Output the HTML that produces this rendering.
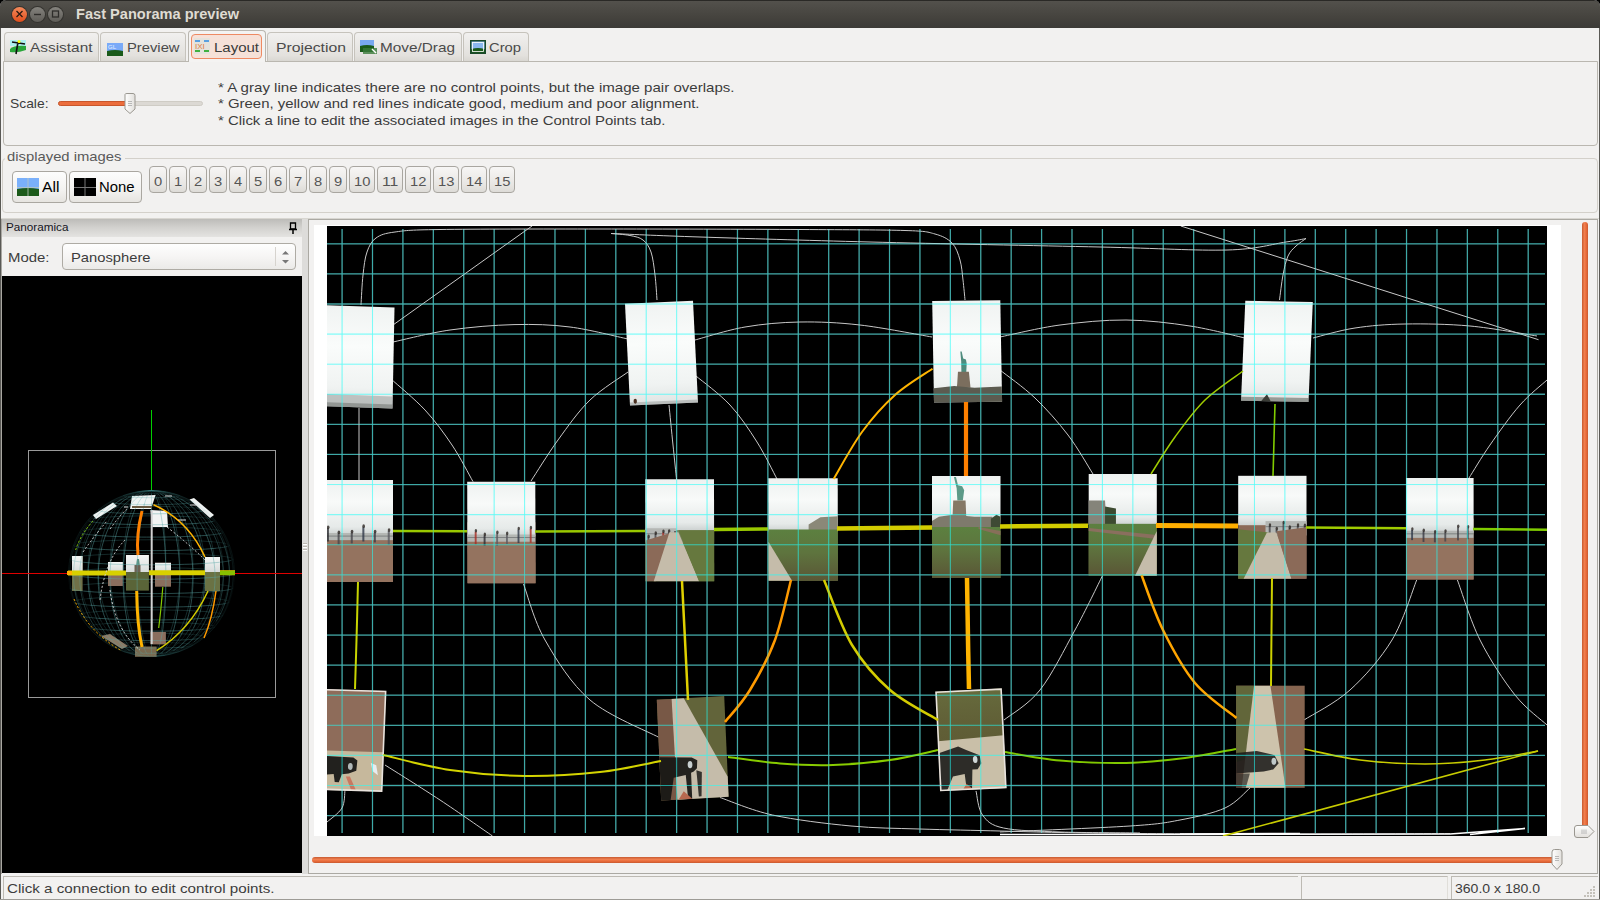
<!DOCTYPE html><html><head><meta charset="utf-8"><style>
*{box-sizing:border-box;margin:0;padding:0}
html,body{width:1600px;height:900px;overflow:hidden;background:#000}
body{position:relative;font-family:"Liberation Sans", sans-serif;color:#3c3c3c;font-size:13px}
.a{position:absolute}
.t{position:absolute;white-space:nowrap;line-height:1}
</style></head><body>
<div class="a" style="left:0;top:0;width:1600px;height:900px;background:#f2f1f0;border-radius:6px 6px 0 0;"></div>
<div class="a" style="left:0;top:0;width:1600px;height:28px;border-radius:6px 6px 0 0;background:linear-gradient(#53514c,#45433e 60%,#3c3b37);border-top:1px solid #2a2926"></div>
<div class="a" style="left:0;top:28px;width:1px;height:872px;background:#5a5955"></div>
<div class="a" style="left:1599px;top:28px;width:1px;height:872px;background:#5a5955"></div>
<div class="a" style="left:11.0px;top:5.5px;width:17.0px;height:17.0px;border-radius:50%;background:#34332f"></div><div class="a" style="left:12.0px;top:6.5px;width:15.0px;height:15.0px;border-radius:50%;background:linear-gradient(#f38a5c,#e04e1c)"></div>
<div class="a" style="left:29.0px;top:5.5px;width:17.0px;height:17.0px;border-radius:50%;background:#34332f"></div><div class="a" style="left:30.0px;top:6.5px;width:15.0px;height:15.0px;border-radius:50%;background:linear-gradient(#84827d,#5f5d58)"></div>
<div class="a" style="left:47.0px;top:5.5px;width:17.0px;height:17.0px;border-radius:50%;background:#34332f"></div><div class="a" style="left:48.0px;top:6.5px;width:15.0px;height:15.0px;border-radius:50%;background:linear-gradient(#84827d,#5f5d58)"></div>
<svg class="a" style="left:0;top:0" width="70" height="28"><path d="M16.5 11 L22.5 17 M22.5 11 L16.5 17" stroke="#2b1a12" stroke-width="1.3"/><path d="M34 14.5 H41" stroke="#2e2d2a" stroke-width="1.4"/><rect x="52.5" y="11" width="6" height="6" fill="none" stroke="#2e2d2a" stroke-width="1.3"/></svg>
<div class="t " id="t0" style="left:76px;top:6.90px;font-size:14px;color:#dfdbd2;font-weight:bold;transform:scaleX(1.0422);transform-origin:0 0;">Fast Panorama preview</div>
<div class="a" style="left:3px;top:61px;width:1595px;height:85px;border:1px solid #bab7b0;border-radius:0 0 4px 4px;background:#f2f1f0"></div>
<div class="a" style="left:4px;top:32px;width:95px;height:29px;border:1px solid #c6c3bc;border-bottom:none;border-radius:4px 4px 0 0;background:linear-gradient(#f1f0ef,#e3e1dd 80%,#d9d7d2)"></div>
<div class="a" style="left:100px;top:32px;width:86px;height:29px;border:1px solid #c6c3bc;border-bottom:none;border-radius:4px 4px 0 0;background:linear-gradient(#f1f0ef,#e3e1dd 80%,#d9d7d2)"></div>
<div class="a" style="left:188px;top:30px;width:78px;height:32px;border:1px solid #b9b6af;border-bottom:none;border-radius:4px 4px 0 0;background:#f4f3f2"></div>
<div class="a" style="left:191px;top:34px;width:71px;height:25px;border:1px solid #ee8a63;border-radius:4px;background:#f6e1d8"></div>
<div class="a" style="left:267px;top:32px;width:86px;height:29px;border:1px solid #c6c3bc;border-bottom:none;border-radius:4px 4px 0 0;background:linear-gradient(#f1f0ef,#e3e1dd 80%,#d9d7d2)"></div>
<div class="a" style="left:354px;top:32px;width:108px;height:29px;border:1px solid #c6c3bc;border-bottom:none;border-radius:4px 4px 0 0;background:linear-gradient(#f1f0ef,#e3e1dd 80%,#d9d7d2)"></div>
<div class="a" style="left:463px;top:32px;width:66px;height:29px;border:1px solid #c6c3bc;border-bottom:none;border-radius:4px 4px 0 0;background:linear-gradient(#f1f0ef,#e3e1dd 80%,#d9d7d2)"></div>
<svg class="a" style="left:0;top:28px" width="540" height="34">
<g transform="translate(10,12)">
 <rect x="0" y="0" width="16" height="6" fill="#aef0f0"/>
 <path d="M0 9 Q4 5 16 6 L16 10 Q8 13 0 12 Z" fill="#2aa63a"/>
 <path d="M6 14 L8 2 M2 2 L15 4" stroke="#111" stroke-width="1.6"/>
 <circle cx="9" cy="1.5" r="1.5" fill="#ff0"/>
</g>
<g transform="translate(107,15)">
 <rect x="0" y="0" width="16" height="13" fill="#7aaaf8"/>
 <path d="M0 8 Q8 6 16 8 L16 13 L0 13Z" fill="#1a5a1a"/>
 <text x="1" y="6" font-size="6" fill="#e8f0ff" font-family="Liberation Sans">GL</text>
</g>
<g transform="translate(194,10)">
 <rect x="0" y="0" width="16" height="16" fill="#e4e2dc"/>
 <rect x="1" y="2" width="5" height="2" fill="#5aa0e0"/><rect x="10" y="2" width="5" height="2" fill="#5aa0e0"/>
 <rect x="1" y="12" width="5" height="2" fill="#40b040"/><rect x="10" y="12" width="5" height="2" fill="#40b040"/>
 <text x="1" y="11" font-size="8" fill="#e08040" font-family="Liberation Sans">IXI</text>
</g>
<g transform="translate(360,12)">
 <rect x="0" y="0" width="14" height="12" fill="#78a8f0"/>
 <path d="M0 6 Q7 4 14 6 L14 12 L0 12Z" fill="#1a5a1a"/>
 <rect x="3" y="8" width="14" height="6" fill="#3a7a3a" opacity="0.8"/>
 <path d="M12 9 L16 13" stroke="#fff" stroke-width="1.5"/>
</g>
<g transform="translate(470,12)">
 <rect x="0" y="0" width="16" height="14" fill="#1a4a2a"/>
 <rect x="1.5" y="1.5" width="13" height="8" fill="#8ab8f0"/>
 <path d="M1.5 9 Q8 7 14.5 9 L14.5 12.5 L1.5 12.5Z" fill="#1a5a1a"/>
 <rect x="2.5" y="2.5" width="11" height="9" fill="none" stroke="#fff" stroke-width="0.8"/>
</g>
</svg>
<div class="t " id="t1" style="left:29.5px;top:41.37px;font-size:13.5px;color:#4a4a4a;font-weight:normal;transform:scaleX(1.1409);transform-origin:0 0;">Assistant</div>
<div class="t " id="t2" style="left:126.5px;top:41.37px;font-size:13.5px;color:#4a4a4a;font-weight:normal;transform:scaleX(1.0934);transform-origin:0 0;">Preview</div>
<div class="t " id="t3" style="left:213.5px;top:41.37px;font-size:13.5px;color:#3a3a3a;font-weight:normal;transform:scaleX(1.1098);transform-origin:0 0;">Layout</div>
<div class="t " id="t4" style="left:276px;top:41.37px;font-size:13.5px;color:#4a4a4a;font-weight:normal;transform:scaleX(1.1658);transform-origin:0 0;">Projection</div>
<div class="t " id="t5" style="left:380px;top:41.37px;font-size:13.5px;color:#4a4a4a;font-weight:normal;transform:scaleX(1.1358);transform-origin:0 0;">Move/Drag</div>
<div class="t " id="t6" style="left:489px;top:41.37px;font-size:13.5px;color:#4a4a4a;font-weight:normal;transform:scaleX(1.0934);transform-origin:0 0;">Crop</div>
<div class="t " id="t7" style="left:10px;top:97.07px;font-size:13.5px;color:#3c3c3c;font-weight:normal;transform:scaleX(1.0258);transform-origin:0 0;">Scale:</div>
<div class="a" style="left:58px;top:100.5px;width:145px;height:5px;border-radius:3px;background:#dcd9d4;border:1px solid #cfccc5"></div>
<div class="a" style="left:58px;top:100.5px;width:72px;height:5px;border-radius:3px;background:#ec6d3c;border:1px solid #c9572c"></div>
<svg class="a" style="left:122px;top:92px" width="16" height="24"><path d="M3 2.5 Q3 1.5 5 1.5 L11 1.5 Q13 1.5 13 3.5 L13 17 L8 21.5 L3 17 Z" fill="url(#hg)" stroke="#9a9790"/>
<defs><linearGradient id="hg" x1="0" x2="1"><stop offset="0" stop-color="#fff"/><stop offset="1" stop-color="#e2e0dc"/></linearGradient></defs>
<path d="M6 9.5H10M6 11.5H10M6 13.5H10" stroke="#aaa" stroke-width="0.8"/></svg>
<div class="t " id="t8" style="left:217.5px;top:80.57px;font-size:13.5px;color:#3c3c3c;font-weight:normal;transform:scaleX(1.1155);transform-origin:0 0;">* A gray line indicates there are no control points, but the image pair overlaps.</div>
<div class="t " id="t9" style="left:217.5px;top:97.17px;font-size:13.5px;color:#3c3c3c;font-weight:normal;transform:scaleX(1.1062);transform-origin:0 0;">* Green, yellow and red lines indicate good, medium and poor alignment.</div>
<div class="t " id="t10" style="left:217.5px;top:113.77px;font-size:13.5px;color:#3c3c3c;font-weight:normal;transform:scaleX(1.1064);transform-origin:0 0;">* Click a line to edit the associated images in the Control Points tab.</div>
<div class="a" style="left:2px;top:158px;width:1596px;height:55px;border:1px solid #d3d0ca;border-radius:4px"></div>
<div class="a" style="left:5px;top:150px;width:120px;height:14px;background:#f2f1f0"></div>
<div class="t " id="t11" style="left:6.5px;top:150.07px;font-size:13.5px;color:#595959;font-weight:normal;transform:scaleX(1.0977);transform-origin:0 0;">displayed images</div>
<div class="a" style="left:12px;top:171px;width:55px;height:32px;border:1px solid #aaa7a1;border-radius:4px;background:linear-gradient(#fdfdfd,#f3f2f0 60%,#e6e4e0)"></div>
<div class="a" style="left:69px;top:171px;width:73px;height:32px;border:1px solid #aaa7a1;border-radius:4px;background:linear-gradient(#fdfdfd,#f3f2f0 60%,#e6e4e0)"></div>
<svg class="a" style="left:17px;top:178px" width="80" height="18">
<rect x="0" y="0" width="22" height="18" fill="#7ab0fb"/><path d="M0 11 Q11 9 22 11 L22 18 L0 18Z" fill="#1c5a1a"/>
<path d="M11 0V18M0 9.5H22" stroke="#bcc8c0" stroke-width="1" opacity="0.8"/>
<rect x="57" y="0" width="22" height="18" fill="#000"/><path d="M68 0V18M57 9.5H79" stroke="#777" stroke-width="1"/>
</svg>
<div class="t " id="t12" style="left:41.5px;top:179.65px;font-size:14px;color:#000;font-weight:normal;transform:scaleX(1.1245);transform-origin:0 0;">All</div>
<div class="t " id="t13" style="left:98.5px;top:179.65px;font-size:14px;color:#000;font-weight:normal;transform:scaleX(1.0607);transform-origin:0 0;">None</div>
<div class="a" style="left:149px;top:166px;width:18px;height:27px;border:1px solid #a9a6a0;border-radius:4px;background:linear-gradient(#f7f6f5,#e8e6e3 70%,#dddbd7)"></div>
<div class="t " id="t14" style="left:153.9px;top:174.57px;font-size:13.5px;color:#555;font-weight:normal;transform:scaleX(1.0911);transform-origin:0 0;">0</div>
<div class="a" style="left:169px;top:166px;width:18px;height:27px;border:1px solid #a9a6a0;border-radius:4px;background:linear-gradient(#f7f6f5,#e8e6e3 70%,#dddbd7)"></div>
<div class="t " id="t15" style="left:173.9px;top:174.57px;font-size:13.5px;color:#555;font-weight:normal;transform:scaleX(1.0911);transform-origin:0 0;">1</div>
<div class="a" style="left:189px;top:166px;width:18px;height:27px;border:1px solid #a9a6a0;border-radius:4px;background:linear-gradient(#f7f6f5,#e8e6e3 70%,#dddbd7)"></div>
<div class="t " id="t16" style="left:193.9px;top:174.57px;font-size:13.5px;color:#555;font-weight:normal;transform:scaleX(1.0911);transform-origin:0 0;">2</div>
<div class="a" style="left:209px;top:166px;width:18px;height:27px;border:1px solid #a9a6a0;border-radius:4px;background:linear-gradient(#f7f6f5,#e8e6e3 70%,#dddbd7)"></div>
<div class="t " id="t17" style="left:213.9px;top:174.57px;font-size:13.5px;color:#555;font-weight:normal;transform:scaleX(1.0911);transform-origin:0 0;">3</div>
<div class="a" style="left:229px;top:166px;width:18px;height:27px;border:1px solid #a9a6a0;border-radius:4px;background:linear-gradient(#f7f6f5,#e8e6e3 70%,#dddbd7)"></div>
<div class="t " id="t18" style="left:233.9px;top:174.57px;font-size:13.5px;color:#555;font-weight:normal;transform:scaleX(1.0911);transform-origin:0 0;">4</div>
<div class="a" style="left:249px;top:166px;width:18px;height:27px;border:1px solid #a9a6a0;border-radius:4px;background:linear-gradient(#f7f6f5,#e8e6e3 70%,#dddbd7)"></div>
<div class="t " id="t19" style="left:253.9px;top:174.57px;font-size:13.5px;color:#555;font-weight:normal;transform:scaleX(1.0911);transform-origin:0 0;">5</div>
<div class="a" style="left:269px;top:166px;width:18px;height:27px;border:1px solid #a9a6a0;border-radius:4px;background:linear-gradient(#f7f6f5,#e8e6e3 70%,#dddbd7)"></div>
<div class="t " id="t20" style="left:273.9px;top:174.57px;font-size:13.5px;color:#555;font-weight:normal;transform:scaleX(1.0911);transform-origin:0 0;">6</div>
<div class="a" style="left:289px;top:166px;width:18px;height:27px;border:1px solid #a9a6a0;border-radius:4px;background:linear-gradient(#f7f6f5,#e8e6e3 70%,#dddbd7)"></div>
<div class="t " id="t21" style="left:293.9px;top:174.57px;font-size:13.5px;color:#555;font-weight:normal;transform:scaleX(1.0911);transform-origin:0 0;">7</div>
<div class="a" style="left:309px;top:166px;width:18px;height:27px;border:1px solid #a9a6a0;border-radius:4px;background:linear-gradient(#f7f6f5,#e8e6e3 70%,#dddbd7)"></div>
<div class="t " id="t22" style="left:313.9px;top:174.57px;font-size:13.5px;color:#555;font-weight:normal;transform:scaleX(1.0911);transform-origin:0 0;">8</div>
<div class="a" style="left:329px;top:166px;width:18px;height:27px;border:1px solid #a9a6a0;border-radius:4px;background:linear-gradient(#f7f6f5,#e8e6e3 70%,#dddbd7)"></div>
<div class="t " id="t23" style="left:333.9px;top:174.57px;font-size:13.5px;color:#555;font-weight:normal;transform:scaleX(1.0911);transform-origin:0 0;">9</div>
<div class="a" style="left:349px;top:166px;width:26px;height:27px;border:1px solid #a9a6a0;border-radius:4px;background:linear-gradient(#f7f6f5,#e8e6e3 70%,#dddbd7)"></div>
<div class="t " id="t24" style="left:353.8px;top:174.57px;font-size:13.5px;color:#555;font-weight:normal;transform:scaleX(1.0911);transform-origin:0 0;">10</div>
<div class="a" style="left:377px;top:166px;width:26px;height:27px;border:1px solid #a9a6a0;border-radius:4px;background:linear-gradient(#f7f6f5,#e8e6e3 70%,#dddbd7)"></div>
<div class="t " id="t25" style="left:381.8px;top:174.57px;font-size:13.5px;color:#555;font-weight:normal;transform:scaleX(1.1701);transform-origin:0 0;">11</div>
<div class="a" style="left:405px;top:166px;width:26px;height:27px;border:1px solid #a9a6a0;border-radius:4px;background:linear-gradient(#f7f6f5,#e8e6e3 70%,#dddbd7)"></div>
<div class="t " id="t26" style="left:409.8px;top:174.57px;font-size:13.5px;color:#555;font-weight:normal;transform:scaleX(1.0911);transform-origin:0 0;">12</div>
<div class="a" style="left:433px;top:166px;width:26px;height:27px;border:1px solid #a9a6a0;border-radius:4px;background:linear-gradient(#f7f6f5,#e8e6e3 70%,#dddbd7)"></div>
<div class="t " id="t27" style="left:437.8px;top:174.57px;font-size:13.5px;color:#555;font-weight:normal;transform:scaleX(1.0911);transform-origin:0 0;">13</div>
<div class="a" style="left:461px;top:166px;width:26px;height:27px;border:1px solid #a9a6a0;border-radius:4px;background:linear-gradient(#f7f6f5,#e8e6e3 70%,#dddbd7)"></div>
<div class="t " id="t28" style="left:465.8px;top:174.57px;font-size:13.5px;color:#555;font-weight:normal;transform:scaleX(1.0911);transform-origin:0 0;">14</div>
<div class="a" style="left:489px;top:166px;width:26px;height:27px;border:1px solid #a9a6a0;border-radius:4px;background:linear-gradient(#f7f6f5,#e8e6e3 70%,#dddbd7)"></div>
<div class="t " id="t29" style="left:493.8px;top:174.57px;font-size:13.5px;color:#555;font-weight:normal;transform:scaleX(1.0911);transform-origin:0 0;">15</div>
<div class="a" style="left:1px;top:218px;width:1598px;height:1px;background:#d8d6d1"></div>
<div class="a" style="left:1px;top:219px;width:302px;height:18px;background:linear-gradient(#bdbcb9,#d3d2cf 50%,#e4e3e1)"></div>
<div class="t " id="t30" style="left:5.5px;top:221.69px;font-size:11px;color:#15151f;font-weight:normal;transform:scaleX(1.0647);transform-origin:0 0;">Panoramica</div>
<svg class="a" style="left:286px;top:221px" width="14" height="14"><path d="M4.5 2H9.5V8H4.5Z" fill="none" stroke="#000" stroke-width="1.3"/><path d="M3 8.5H11M7 8.5V13" stroke="#000" stroke-width="1.5"/></svg>
<div class="a" style="left:1px;top:237px;width:302px;height:39px;background:#f2f1f0"></div>
<div class="t " id="t31" style="left:7.5px;top:250.57px;font-size:13.5px;color:#3c3c3c;font-weight:normal;transform:scaleX(1.1057);transform-origin:0 0;">Mode:</div>
<div class="a" style="left:62px;top:243px;width:234px;height:27px;border:1px solid #aeaba4;border-radius:4px;background:linear-gradient(#fefefe,#f6f5f4 50%,#ebeae8)"></div>
<div class="a" style="left:275px;top:247px;width:1px;height:19px;background:#d6d3ce"></div>
<svg class="a" style="left:280px;top:249px" width="12" height="16"><path d="M2 5.5L5.5 2 9 5.5Z M2 11L5.5 14.5 9 11Z" fill="#777"/></svg>
<div class="t " id="t32" style="left:70.5px;top:250.57px;font-size:13.5px;color:#3c3c3c;font-weight:normal;transform:scaleX(1.0918);transform-origin:0 0;">Panosphere</div>
<div class="a" style="left:2px;top:276px;width:300px;height:597px;background:#000"></div>
<div class="a" style="left:1px;top:219px;width:1px;height:655px;background:#a9a7a2"></div>
<div class="a" style="left:302px;top:219px;width:6px;height:655px;background:#dddcda"></div>
<svg class="a" style="left:302px;top:541px" width="6" height="12"><path d="M1 2.5H5M1 5.5H5M1 8.5H5" stroke="#bdb8b2" stroke-width="1"/><path d="M1 3.5H5M1 6.5H5M1 9.5H5" stroke="#fff" stroke-width="1"/></svg>
<div class="a" style="left:308px;top:219px;width:1290px;height:655px;border:1px solid #aba9a3;background:#f2f1f0"></div>
<div class="a" style="left:314px;top:225px;width:1247px;height:611px;background:#fff"></div>
<div class="a" style="left:327px;top:226px;width:1220px;height:610px;background:#000"></div>
<div class="a" style="left:1581.5px;top:222px;width:6px;height:608px;border-radius:3px;background:linear-gradient(90deg,#c85a30,#f08050 40%,#ea6b3a 70%,#c85a30)"></div>
<svg class="a" style="left:1573px;top:824px" width="24" height="16"><path d="M4 1.5 L15 1.5 L21 7.5 L15 13.5 L4 13.5 Q1.5 13.5 1.5 11 L1.5 4 Q1.5 1.5 4 1.5Z" fill="url(#vg)" stroke="#9a9790"/>
<defs><linearGradient id="vg" x1="0" y1="0" x2="0" y2="1"><stop offset="0" stop-color="#fff"/><stop offset="1" stop-color="#e2e0dc"/></linearGradient></defs>
<path d="M9 5.5V10M11 5.5V10M13 5.5V10" stroke="#aaa" stroke-width="0.8"/></svg>
<div class="a" style="left:312px;top:856.5px;width:1245px;height:6px;border-radius:3px;background:linear-gradient(#c85a30,#f08050 40%,#ea6b3a 70%,#c85a30)"></div>
<svg class="a" style="left:1549px;top:848px" width="16" height="24"><path d="M3 4 Q3 1.5 5.5 1.5 L10.5 1.5 Q13 1.5 13 4 L13 16 L8 21.5 L3 16 Z" fill="url(#hg2)" stroke="#9a9790"/>
<defs><linearGradient id="hg2" x1="0" x2="1"><stop offset="0" stop-color="#fff"/><stop offset="1" stop-color="#e2e0dc"/></linearGradient></defs>
<path d="M6 8.5H10M6 10.5H10M6 12.5H10" stroke="#aaa" stroke-width="0.8"/></svg>
<div class="a" style="left:1px;top:874px;width:1598px;height:26px;background:#f2f1f0"></div>
<div class="a" style="left:3px;top:876px;width:1295px;height:23px;border-left:1px solid #bdbab3;border-top:1px solid #bdbab3"></div>
<div class="a" style="left:1301px;top:876px;width:147px;height:23px;border-left:1px solid #bdbab3;border-top:1px solid #bdbab3;border-right:1px solid #e0ded9"></div>
<div class="a" style="left:1451px;top:876px;width:147px;height:23px;border-left:1px solid #bdbab3;border-top:1px solid #bdbab3"></div>
<div class="t " id="t33" style="left:6.5px;top:881.57px;font-size:13.5px;color:#3c3c3c;font-weight:normal;transform:scaleX(1.1245);transform-origin:0 0;">Click a connection to edit control points.</div>
<div class="t " id="t34" style="left:1455px;top:881.57px;font-size:13.5px;color:#3c3c3c;font-weight:normal;transform:scaleX(1.0388);transform-origin:0 0;">360.0 x 180.0</div>
<div class="a" style="left:0;top:899px;width:1600px;height:1px;background:#9d9b96"></div>
<svg class="a" style="left:1582px;top:884px" width="16" height="15"><g fill="#c4c1ba"><rect x="11" y="2" width="2" height="2"/><rect x="8" y="5" width="2" height="2"/><rect x="11" y="5" width="2" height="2"/><rect x="5" y="8" width="2" height="2"/><rect x="8" y="8" width="2" height="2"/><rect x="11" y="8" width="2" height="2"/><rect x="2" y="11" width="2" height="2"/><rect x="5" y="11" width="2" height="2"/><rect x="8" y="11" width="2" height="2"/><rect x="11" y="11" width="2" height="2"/></g></svg>
<svg class="a" style="left:314px;top:225px" width="1247" height="611" viewBox="314 225 1247 611">
<defs><linearGradient id="sky" x1="0" y1="0" x2="0" y2="1"><stop offset="0" stop-color="#f0f3f2"/><stop offset="0.4" stop-color="#fafcfb"/><stop offset="0.8" stop-color="#f0f3f2"/><stop offset="1" stop-color="#e0e4e3"/></linearGradient><linearGradient id="sky2" x1="0" y1="0" x2="0" y2="1"><stop offset="0" stop-color="#eef1f0"/><stop offset="0.4" stop-color="#f8faf9"/><stop offset="0.85" stop-color="#e6eae9"/><stop offset="1" stop-color="#cdd2d1"/></linearGradient><linearGradient id="grs" x1="0" y1="0" x2="0" y2="1"><stop offset="0" stop-color="#6a7040" stop-opacity="0.6"/><stop offset="1" stop-color="#5a5030" stop-opacity="0.4"/></linearGradient><linearGradient id="grI" x1="0" y1="0" x2="0" y2="1"><stop offset="0" stop-color="#5c8040"/><stop offset="0.45" stop-color="#5e743e"/><stop offset="1" stop-color="#5a5636"/></linearGradient><clipPath id="cv"><rect x="327" y="226" width="1220" height="610"/></clipPath></defs>
<g clip-path="url(#cv)">
<path d="M342.09 229V833 M372.50 229V833 M402.92 229V833 M433.33 229V833 M463.74 229V833 M494.15 229V833 M524.57 229V833 M554.98 229V833 M585.39 229V833 M615.81 229V833 M646.22 229V833 M676.63 229V833 M707.05 229V833 M737.46 229V833 M767.87 229V833 M798.28 229V833 M828.70 229V833 M859.11 229V833 M889.52 229V833 M919.94 229V833 M950.35 229V833 M980.76 229V833 M1011.18 229V833 M1041.59 229V833 M1072.00 229V833 M1102.41 229V833 M1132.83 229V833 M1163.24 229V833 M1193.65 229V833 M1224.07 229V833 M1254.48 229V833 M1284.89 229V833 M1315.31 229V833 M1345.72 229V833 M1376.13 229V833 M1406.54 229V833 M1436.96 229V833 M1467.37 229V833 M1497.78 229V833 M1528.20 229V833 M327 243.80H1545 M327 273.89H1545 M327 303.99H1545 M327 334.09H1545 M327 364.18H1545 M327 394.27H1545 M327 424.37H1545 M327 454.47H1545 M327 484.56H1545 M327 514.65H1545 M327 544.75H1545 M327 574.85H1545 M327 604.94H1545 M327 635.04H1545 M327 665.13H1545 M327 695.22H1545 M327 725.32H1545 M327 755.41H1545 M327 785.51H1545 M327 815.61H1545" stroke="#4a7c7c" stroke-width="1.3" fill="none"/>
<path d="M361.0 305.0C361.3 300.0 362.0 283.8 363.0 275.0C364.0 266.2 364.8 258.2 367.0 252.0C369.2 245.8 371.3 241.3 376.0 238.0C380.7 234.7 384.3 233.4 395.0 232.0C405.7 230.6 405.8 230.0 440.0 229.5C474.2 229.0 540.0 229.0 600.0 229.0C660.0 229.0 749.2 229.2 800.0 229.5C850.8 229.8 882.5 229.8 905.0 230.5C927.5 231.2 927.2 231.9 935.0 234.0C942.8 236.1 947.8 238.7 952.0 243.0C956.2 247.3 958.2 253.8 960.0 260.0C961.8 266.2 962.2 273.3 963.0 280.0C963.8 286.7 964.7 296.7 965.0 300.0 M657.0 300.0C656.7 295.8 656.0 283.0 655.0 275.0C654.0 267.0 653.0 257.8 651.0 252.0C649.0 246.2 646.5 242.8 643.0 240.0C639.5 237.2 635.3 236.6 630.0 235.5C624.7 234.4 614.2 233.8 611.0 233.5 M611.0 233.5C625.8 234.1 656.8 235.6 700.0 237.0C743.2 238.4 803.3 240.3 870.0 242.0C936.7 243.7 1040.5 245.7 1100.0 247.0C1159.5 248.3 1196.0 250.8 1227.0 250.0C1258.0 249.2 1272.8 243.9 1286.0 242.0C1299.2 240.1 1302.7 239.1 1306.0 238.5 M1306.0 238.5C1304.3 239.8 1299.0 243.1 1296.0 246.0C1293.0 248.9 1290.2 251.2 1288.0 256.0C1285.8 260.8 1284.4 267.7 1283.0 275.0C1281.6 282.3 1280.1 295.8 1279.5 300.0 M1180.8 226.0L1538.5 339.7 M393.0 325.0L532.0 226.0 M393.0 342.0C402.5 340.0 429.8 332.9 450.0 330.0C470.2 327.1 494.0 325.1 514.0 324.6C534.0 324.1 551.0 324.6 570.0 327.0C589.0 329.4 618.3 337.0 628.0 339.0 M695.0 340.0C703.3 337.8 727.5 330.0 745.0 327.0C762.5 324.0 780.8 322.3 800.0 322.0C819.2 321.7 838.0 322.5 860.0 325.0C882.0 327.5 920.0 335.0 932.0 337.0 M1000.0 337.0C1010.0 335.0 1039.0 327.8 1060.0 325.0C1081.0 322.2 1104.3 319.8 1126.0 320.0C1147.7 320.2 1170.2 323.0 1190.0 326.0C1209.8 329.0 1235.8 336.0 1245.0 338.0 M1313.0 338.0C1320.0 336.3 1339.7 330.3 1355.0 328.0C1370.3 325.7 1385.8 324.3 1405.0 324.0C1424.2 323.7 1448.0 324.0 1470.0 326.0C1492.0 328.0 1525.8 334.3 1537.0 336.0 M391.0 379.0C396.7 384.2 414.8 399.0 425.0 410.0C435.2 421.0 444.0 433.1 452.0 445.0C460.0 456.9 469.5 475.5 473.0 481.6 M628.0 372.0C621.7 376.7 601.7 388.7 590.0 400.0C578.3 411.3 567.8 426.5 558.0 440.0C548.2 453.5 535.5 474.2 531.0 481.0 M669.0 405.0C669.7 411.7 671.7 432.5 673.0 445.0C674.3 457.5 676.0 474.2 676.6 480.0 M696.0 376.0C701.7 380.8 719.8 394.0 730.0 405.0C740.2 416.0 749.2 429.7 757.0 442.0C764.8 454.3 773.7 472.8 777.0 479.0 M359.0 408.0L359.0 480.0 M1000.0 370.0C1005.8 374.7 1023.7 387.2 1035.0 398.0C1046.3 408.8 1058.3 422.3 1068.0 435.0C1077.7 447.7 1088.8 467.5 1093.0 474.0 M1547.0 380.0C1542.5 384.2 1529.5 394.2 1520.0 405.0C1510.5 415.8 1498.5 432.8 1490.0 445.0C1481.5 457.2 1472.5 472.5 1469.0 478.0 M523.5 584.0C527.1 593.3 533.9 620.7 545.0 640.0C556.1 659.3 571.0 683.8 590.0 700.0C609.0 716.2 647.5 731.2 659.0 737.4 M345.0 790.0C344.5 793.0 345.0 802.7 342.0 808.0C339.0 813.3 329.5 819.7 327.0 822.0 M385.0 765.0C394.2 770.8 422.1 788.2 440.0 800.0C457.9 811.8 483.8 830.0 492.5 836.0 M720.0 797.5C728.8 800.4 750.7 810.2 772.5 815.0C794.3 819.8 826.5 823.7 851.0 826.0C875.5 828.3 894.7 828.2 919.5 829.0C944.3 829.8 976.6 830.4 1000.0 831.0C1023.4 831.6 1036.7 832.1 1060.0 832.5C1083.3 832.9 1100.0 833.2 1140.0 833.5C1180.0 833.8 1248.3 834.0 1300.0 834.0C1351.7 834.0 1425.0 833.6 1450.0 833.5 M976.0 791.0C977.1 795.0 977.9 808.8 982.5 815.0C987.1 821.2 990.4 825.2 1003.5 828.0C1016.6 830.8 1038.2 831.2 1061.0 832.0C1083.8 832.8 1126.8 832.8 1140.0 833.0 M1102.8 575.0C1098.2 584.2 1085.5 610.8 1075.0 630.0C1064.5 649.2 1051.8 675.0 1040.0 690.0C1028.2 705.0 1010.0 715.0 1004.0 720.0 M1416.7 580.0C1412.6 590.0 1403.1 621.7 1392.0 640.0C1380.9 658.3 1364.7 676.7 1350.0 690.0C1335.3 703.3 1311.7 715.0 1304.0 720.0 M1457.4 580.0C1461.2 590.0 1470.4 620.8 1480.0 640.0C1489.6 659.2 1503.8 680.8 1515.0 695.0C1526.2 709.2 1541.7 720.0 1547.0 725.0 M1250.0 788.0C1245.8 791.3 1236.7 802.7 1225.0 808.0C1213.3 813.3 1195.8 817.0 1180.0 820.0C1164.2 823.0 1160.0 824.0 1130.0 826.0C1100.0 828.0 1021.7 831.0 1000.0 832.0" stroke="#c8c8c8" stroke-width="1" fill="none"/>
<path d="M1000 834.5 L1200 834.5 L1450 834 L1525 828.5 L1470 834.5 M1180 834 L1300 833.5" stroke="#ffffff" stroke-width="1.5" fill="none"/>
<g transform="matrix(0.7250 0.0250 -0.0200 1.0100 322 305)"><rect x="0" y="0" width="100" height="100" fill="url(#sky)"/><rect x="0" y="88" width="100" height="12" fill="#9a9e9c" opacity="0.55"/><rect x="0" y="96" width="100" height="4" fill="#6a6e6a" opacity="0.5"/></g>
<g transform="matrix(0.6800 -0.0300 0.0500 1.0180 625 303.7)"><rect x="0" y="0" width="100" height="100" fill="url(#sky)"/><rect x="0" y="97" width="100" height="3" fill="#9a9e9c" opacity="0.55"/><circle cx="8" cy="96" r="2.5" fill="#4a3020"/></g>
<g transform="matrix(0.6810 -0.0080 0.0180 1.0140 932.2 301.1)"><rect x="0" y="0" width="100" height="100" fill="url(#sky)"/><rect x="0" y="100" width="100" height="0" fill="#5d5d52" opacity="0.55"/><polygon points="40,50 42,50 44,57 48,58 49,62 48,72 41,72 41,60" fill="#4f8c7e"/><polygon points="36,70 52,70 54,86 34,86" fill="#7b6e5e"/><polygon points="0,86 30,84 60,86 100,85 100,100 0,100" fill="#5c5b50"/></g>
<g transform="matrix(0.6750 0.0130 -0.0430 1.0000 1245.3 300.7)"><rect x="0" y="0" width="100" height="100" fill="url(#sky)"/><rect x="0" y="96" width="100" height="4" fill="#5a5c56" opacity="0.55"/><polygon points="30,100 38,93 44,100" fill="#3a3c36"/></g>
<g transform="matrix(0.7300 0.0000 0.0000 1.0200 320 480)"><rect x="0" y="40" width="100" height="60" fill="#8b6a58"/><rect x="0" y="0" width="100" height="54" fill="url(#sky2)"/><rect x="0" y="59" width="100" height="41" fill="#94735f"/><rect x="0" y="52" width="100" height="7" fill="#b4b7b4"/><rect x="0" y="54.5" width="100" height="1.0" fill="#6a6c6e" opacity="0.7"/><rect x="9.4" y="47.3" width="2.8" height="13.0" fill="#2a2a30" opacity="0.8"/><circle cx="11.2" cy="46.3" r="1.8" fill="#2a2420" opacity="0.8"/><rect x="24.1" y="52.2" width="2.8" height="11.1" fill="#45454a" opacity="0.8"/><circle cx="25.9" cy="51.2" r="1.8" fill="#2a2420" opacity="0.8"/><rect x="42.1" y="51.6" width="2.8" height="10.6" fill="#45454a" opacity="0.8"/><circle cx="43.9" cy="50.6" r="1.8" fill="#2a2420" opacity="0.8"/><rect x="58.0" y="46.3" width="2.8" height="14.0" fill="#303848" opacity="0.8"/><circle cx="59.8" cy="45.3" r="1.8" fill="#2a2420" opacity="0.8"/><rect x="73.7" y="51.5" width="2.8" height="9.7" fill="#3a3a44" opacity="0.8"/><circle cx="75.5" cy="50.5" r="1.8" fill="#2a2420" opacity="0.8"/><rect x="92.8" y="50.0" width="2.8" height="13.7" fill="#5a5a60" opacity="0.8"/><circle cx="94.6" cy="49.0" r="1.8" fill="#2a2420" opacity="0.8"/></g>
<g transform="matrix(0.6810 0.0000 0.0030 1.0140 467.2 481.8)"><rect x="0" y="40" width="100" height="60" fill="#8b6a58"/><rect x="0" y="0" width="100" height="54" fill="url(#sky2)"/><rect x="0" y="59" width="100" height="41" fill="#94735f"/><rect x="0" y="52" width="100" height="7" fill="#b4b7b4"/><rect x="0" y="54.5" width="100" height="1.0" fill="#6a6c6e" opacity="0.7"/><rect x="10.8" y="49.3" width="2.8" height="12.5" fill="#a82a22" opacity="0.8"/><circle cx="12.6" cy="48.3" r="1.8" fill="#2a2420" opacity="0.8"/><rect x="23.9" y="52.9" width="2.8" height="9.8" fill="#2a2a30" opacity="0.8"/><circle cx="25.7" cy="51.9" r="1.8" fill="#2a2420" opacity="0.8"/><rect x="42.3" y="50.9" width="2.8" height="12.3" fill="#5a5a60" opacity="0.8"/><circle cx="44.1" cy="49.9" r="1.8" fill="#2a2420" opacity="0.8"/><rect x="56.7" y="51.9" width="2.8" height="9.4" fill="#5a5a60" opacity="0.8"/><circle cx="58.5" cy="50.9" r="1.8" fill="#2a2420" opacity="0.8"/><rect x="73.7" y="47.1" width="2.8" height="13.3" fill="#303848" opacity="0.8"/><circle cx="75.5" cy="46.1" r="1.8" fill="#2a2420" opacity="0.8"/><rect x="91.6" y="46.2" width="2.8" height="13.9" fill="#a82a22" opacity="0.8"/><circle cx="93.4" cy="45.2" r="1.8" fill="#2a2420" opacity="0.8"/></g>
<g transform="matrix(0.6870 0.0000 0.0020 1.0200 645.3 479.3)"><rect x="0" y="40" width="100" height="60" fill="#66783e"/><rect x="0" y="0" width="100" height="50" fill="url(#sky2)"/><rect x="0" y="48" width="45" height="14" fill="#b4b7b4"/><rect x="0" y="52.9" width="45" height="1.0" fill="#6a6c6e" opacity="0.7"/><rect x="2.9" y="57.0" width="2.8" height="9.7" fill="#45454a" opacity="0.8"/><circle cx="4.7" cy="56.0" r="1.8" fill="#2a2420" opacity="0.8"/><rect x="13.3" y="53.7" width="2.8" height="9.3" fill="#45454a" opacity="0.8"/><circle cx="15.1" cy="52.7" r="1.8" fill="#2a2420" opacity="0.8"/><rect x="24.5" y="52.0" width="2.8" height="11.8" fill="#a82a22" opacity="0.8"/><circle cx="26.3" cy="51.0" r="1.8" fill="#2a2420" opacity="0.8"/><rect x="32.8" y="51.7" width="2.8" height="13.2" fill="#45454a" opacity="0.8"/><circle cx="34.6" cy="50.7" r="1.8" fill="#2a2420" opacity="0.8"/><rect x="41.3" y="53.4" width="2.8" height="10.2" fill="#3a3a44" opacity="0.8"/><circle cx="43.1" cy="52.4" r="1.8" fill="#2a2420" opacity="0.8"/><rect x="45" y="50" width="55" height="12" fill="#8a8e8a" opacity="0.5"/><polygon points="0,60 40,52 15,100 0,100" fill="#8b6a58"/><polygon points="35,52 48,52 78,100 12,100" fill="#c5bcaa"/><polygon points="48,50 100,50 100,100 78,100" fill="#66783e"/></g>
<g transform="matrix(0.6940 0.0000 0.0020 1.0240 768.3 478.3)"><rect x="0" y="40" width="100" height="60" fill="#66783e"/><rect x="0" y="0" width="100" height="52" fill="url(#sky2)"/><polygon points="58,45 75,38 100,37 100,52 58,52" fill="#8a8878"/><rect x="0" y="50" width="100" height="50" fill="url(#grI)"/><polygon points="0,62 0,100 34,100" fill="#c5bcaa"/></g>
<g transform="matrix(0.6850 0.0000 0.0000 1.0200 932 476)"><rect x="0" y="40" width="100" height="60" fill="#66783e"/><rect x="0" y="0" width="100" height="46" fill="url(#sky2)"/><polygon points="32,1 35,1 38,9 44,10 47,14 45,24 37,24 36,12" fill="#5d9a88"/><polygon points="31,24 49,24 50,40 30,40" fill="#857866"/><polygon points="0,44 10,40 30,38 62,40 88,40 90,46 100,46 100,52 0,52" fill="#7e7a6c"/><polygon points="86,42 94,38 100,40 100,50 86,50" fill="#3e4a34"/><rect x="0" y="50" width="100" height="50" fill="url(#grI)"/><polygon points="68,50 100,54 100,58 68,52" fill="#8c6e5c" opacity="0.9"/></g>
<g transform="matrix(0.6810 0.0000 0.0000 1.0170 1088.7 474)"><rect x="0" y="40" width="100" height="60" fill="#66783e"/><rect x="0" y="0" width="100" height="50" fill="url(#sky2)"/><polygon points="0,26 24,26 26,50 0,50" fill="#85847a"/><polygon points="24,32 40,34 40,50 24,50" fill="#3c4a30"/><rect x="0" y="49" width="100" height="51" fill="url(#grI)"/><polygon points="0,53 100,60 100,64 0,56" fill="#8a6f5e"/><polygon points="100,56 100,100 68,100" fill="#c5bcaa"/></g>
<g transform="matrix(0.6830 0.0000 0.0000 1.0290 1238.2 475.8)"><rect x="0" y="40" width="100" height="60" fill="#8b6a58"/><rect x="0" y="0" width="100" height="48" fill="url(#sky2)"/><rect x="40" y="44" width="60" height="14" fill="#b4b7b4"/><rect x="40" y="48.9" width="60" height="1.0" fill="#6a6c6e" opacity="0.7"/><rect x="44.7" y="48.8" width="2.8" height="13.3" fill="#45454a" opacity="0.8"/><circle cx="46.5" cy="47.8" r="1.8" fill="#2a2420" opacity="0.8"/><rect x="54.7" y="52.3" width="2.8" height="9.9" fill="#45454a" opacity="0.8"/><circle cx="56.5" cy="51.3" r="1.8" fill="#2a2420" opacity="0.8"/><rect x="64.9" y="46.4" width="2.8" height="13.0" fill="#45454a" opacity="0.8"/><circle cx="66.7" cy="45.4" r="1.8" fill="#2a2420" opacity="0.8"/><rect x="73.8" y="50.9" width="2.8" height="11.7" fill="#2a2a30" opacity="0.8"/><circle cx="75.6" cy="49.9" r="1.8" fill="#2a2420" opacity="0.8"/><rect x="85.8" y="48.9" width="2.8" height="13.9" fill="#45454a" opacity="0.8"/><circle cx="87.6" cy="47.9" r="1.8" fill="#2a2420" opacity="0.8"/><rect x="95.9" y="49.2" width="2.8" height="12.3" fill="#45454a" opacity="0.8"/><circle cx="97.7" cy="48.2" r="1.8" fill="#2a2420" opacity="0.8"/><polygon points="0,52 45,55 10,100 0,100" fill="#66783e"/><polygon points="42,55 56,55 78,100 8,100" fill="#c5bcaa"/><polygon points="56,54 100,50 100,100 78,100" fill="#8b6a58"/></g>
<g transform="matrix(0.6760 0.0000 0.0000 1.0150 1406 478)"><rect x="0" y="40" width="100" height="60" fill="#8b6a58"/><rect x="0" y="0" width="100" height="54" fill="url(#sky2)"/><rect x="0" y="59" width="100" height="41" fill="#94735f"/><rect x="0" y="52" width="100" height="7" fill="#b4b7b4"/><rect x="0" y="54.5" width="100" height="1.0" fill="#6a6c6e" opacity="0.7"/><rect x="7.6" y="51.2" width="2.8" height="10.0" fill="#303848" opacity="0.8"/><circle cx="9.4" cy="50.2" r="1.8" fill="#2a2420" opacity="0.8"/><rect x="24.5" y="52.6" width="2.8" height="10.4" fill="#3a3a44" opacity="0.8"/><circle cx="26.3" cy="51.6" r="1.8" fill="#2a2420" opacity="0.8"/><rect x="41.3" y="54.0" width="2.8" height="9.4" fill="#3a3a44" opacity="0.8"/><circle cx="43.1" cy="53.0" r="1.8" fill="#2a2420" opacity="0.8"/><rect x="56.7" y="53.3" width="2.8" height="9.3" fill="#45454a" opacity="0.8"/><circle cx="58.5" cy="52.3" r="1.8" fill="#2a2420" opacity="0.8"/><rect x="75.5" y="48.6" width="2.8" height="12.9" fill="#45454a" opacity="0.8"/><circle cx="77.3" cy="47.6" r="1.8" fill="#2a2420" opacity="0.8"/><rect x="90.1" y="49.0" width="2.8" height="11.3" fill="#45454a" opacity="0.8"/><circle cx="91.9" cy="48.0" r="1.8" fill="#2a2420" opacity="0.8"/></g>
<g transform="matrix(0.6800 0.0210 -0.0400 1.0060 318 688.9)"><rect x="0" y="0" width="100" height="63" fill="#8e6c5a"/><rect x="0" y="61" width="100" height="39" fill="#c6b89c"/><polygon points="0,66 56,67 62,70 61,80 50,83 40,84 36,92 30,92 28,84 0,86" fill="#141414" opacity="0.92"/><circle cx="52" cy="76" r="3.5" fill="#b0b8b8"/><polygon points="46,86 52,86 62,100 55,100" fill="#c87860"/><polygon points="82,72 90,74 93,84 85,80" fill="#e8ecf0"/><rect x="0.5" y="0.5" width="99" height="99" fill="none" stroke="#e8e2dc" stroke-width="1.6" vector-effect="non-scaling-stroke"/></g>
<g transform="matrix(0.6740 -0.0380 0.0440 1.0080 656.8 699.8)"><rect x="0" y="0" width="100" height="100" fill="#62643a"/><polygon points="0,0 24,0 24,100 0,100" fill="#785846"/><polygon points="22,0 40,0 100,80 100,100 24,100" fill="#c5bcaa"/><polygon points="0,57 48,59 56,62 55,70 50,73 46,74 46,100 40,100 38,76 20,78 14,100 0,100" fill="#161614" opacity="0.92"/><polygon points="54,72 62,74 60,98 56,98" fill="#1a1a18" opacity="0.85"/><circle cx="45" cy="66" r="3.5" fill="#c8d0d0"/><polygon points="26,100 34,92 46,100" fill="#b86a50"/></g>
<g transform="matrix(0.6570 -0.0310 0.0480 0.9930 935.7 691.7)"><rect x="0" y="0" width="100" height="52" fill="#626438"/><rect x="0" y="0" width="100" height="52" fill="url(#grs)"/><polygon points="0,50 100,47 100,100 0,100" fill="#c9bfa8"/><polygon points="0,62 30,56 42,60 62,66 64,74 58,80 50,80 48,100 40,100 38,84 20,86 10,100 0,100" fill="#1c1c1a" opacity="0.9"/><circle cx="55" cy="70" r="3.5" fill="#d0d8d8"/><polygon points="34,100 40,94 50,100" fill="#b86a50"/><rect x="0.5" y="0.5" width="99" height="99" fill="none" stroke="#e8e2dc" stroke-width="1.6" vector-effect="non-scaling-stroke"/></g>
<g transform="matrix(0.6850 0.0000 0.0000 1.0210 1236.2 685.7)"><rect x="0" y="0" width="100" height="100" fill="#86644f"/><polygon points="0,0 26,0 22,70 0,75" fill="#62663a"/><polygon points="26,0 50,0 72,100 8,100" fill="#cdc3ac"/><polygon points="0,66 30,64 56,68 62,76 54,82 40,84 0,86" fill="#181816" opacity="0.85"/><polygon points="0,86 20,86 14,100 0,100" fill="#2a2a26" opacity="0.7"/><circle cx="55" cy="74" r="3.5" fill="#c0c8c8"/></g>
<path d="M966.0 402.0L966.0 476.0" stroke="#ff8000" stroke-width="4.2" fill="none"/>
<path d="M967.0 578.0C967.2 588.3 967.7 621.5 968.0 640.0C968.3 658.5 968.8 680.8 969.0 689.0" stroke="#ffb400" stroke-width="4.5" fill="none"/>
<path d="M393.0 531.0L467.0 531.3" stroke="#99c800" stroke-width="2.5" fill="none"/>
<path d="M535.0 531.5L645.0 531.0" stroke="#99c800" stroke-width="2.5" fill="none"/>
<path d="M714.0 529.5L768.0 529.0" stroke="#99c800" stroke-width="3.5" fill="none"/>
<path d="M837.0 528.5L932.0 527.5" stroke="#d2cc00" stroke-width="4.5" fill="none"/>
<path d="M1000.0 526.5L1088.0 525.8" stroke="#d2cc00" stroke-width="4.5" fill="none"/>
<path d="M1156.0 525.6L1238.0 526.0" stroke="#ffae00" stroke-width="5" fill="none"/>
<path d="M1306.0 527.5L1406.0 528.3" stroke="#a0cc00" stroke-width="2.5" fill="none"/>
<path d="M1473.0 529.0L1547.0 529.8" stroke="#80cc00" stroke-width="2.5" fill="none"/>
<path d="M833.6 479.0C838.3 471.2 851.8 446.0 862.0 432.0C872.2 418.0 883.2 405.6 895.0 395.0C906.8 384.4 926.2 373.1 932.5 368.7" stroke="#ffb400" stroke-width="2" fill="none"/>
<path d="M1243.0 371.0C1236.7 375.8 1216.3 389.0 1205.0 400.0C1193.7 411.0 1184.0 424.7 1175.0 437.0C1166.0 449.3 1155.0 467.8 1151.0 474.0" stroke="#a0cc00" stroke-width="1.5" fill="none"/>
<path d="M1275.0 404.0C1274.8 410.0 1274.3 428.0 1274.0 440.0C1273.7 452.0 1273.2 470.0 1273.0 476.0" stroke="#80cc00" stroke-width="1.6" fill="none"/>
<path d="M358.0 582.0C357.8 591.7 357.0 622.2 356.5 640.0C356.0 657.8 355.2 680.8 355.0 689.0" stroke="#c8d400" stroke-width="2" fill="none"/>
<path d="M682.0 581.0C682.5 590.8 684.0 620.2 685.0 640.0C686.0 659.8 687.5 690.0 688.0 700.0" stroke="#e0d000" stroke-width="2.5" fill="none"/>
<path d="M791.0 580.0C788.3 590.0 781.8 621.7 775.0 640.0C768.2 658.3 758.3 676.3 750.0 690.0C741.7 703.7 729.2 716.7 725.0 722.0" stroke="#ff9a00" stroke-width="2.5" fill="none"/>
<path d="M824.0 580.0C828.7 590.8 841.0 626.7 852.0 645.0C863.0 663.3 875.7 677.5 890.0 690.0C904.3 702.5 930.0 715.0 938.0 720.0" stroke="#d4cc00" stroke-width="2.5" fill="none"/>
<path d="M1141.5 575.0C1145.1 584.2 1154.1 612.0 1163.0 630.0C1171.9 648.0 1182.8 668.3 1195.0 683.0C1207.2 697.7 1229.6 712.2 1236.5 718.0" stroke="#ffa500" stroke-width="2.5" fill="none"/>
<path d="M1272.0 578.0C1271.9 586.7 1271.7 612.0 1271.5 630.0C1271.3 648.0 1271.1 676.7 1271.0 686.0" stroke="#ccd000" stroke-width="2" fill="none"/>
<path d="M383.0 755.0C394.2 757.5 426.3 766.5 450.0 770.0C473.7 773.5 500.0 775.7 525.0 776.0C550.0 776.3 577.3 774.5 600.0 772.0C622.7 769.5 650.8 762.8 661.0 761.0" stroke="#d4d400" stroke-width="2" fill="none"/>
<path d="M728.0 757.0C736.7 758.1 762.5 762.2 780.0 763.5C797.5 764.8 814.7 765.6 833.0 765.0C851.3 764.4 872.5 762.5 890.0 760.0C907.5 757.5 930.0 751.7 938.0 750.0" stroke="#88cc00" stroke-width="2" fill="none"/>
<path d="M1005.0 752.0C1014.2 753.4 1039.8 758.7 1060.0 760.5C1080.2 762.3 1105.2 763.4 1126.0 763.0C1146.8 762.6 1166.7 760.3 1185.0 758.0C1203.3 755.7 1227.5 750.5 1236.0 749.0" stroke="#80c800" stroke-width="2" fill="none"/>
<path d="M1304.0 749.0C1313.3 750.8 1339.8 757.5 1360.0 760.0C1380.2 762.5 1404.2 764.0 1425.0 764.0C1445.8 764.0 1466.2 762.2 1485.0 760.0C1503.8 757.8 1529.2 752.5 1538.0 751.0" stroke="#c8cc00" stroke-width="1.6" fill="none"/>
<path d="M1223.0 836.0L1538.0 751.0" stroke="#c8cc00" stroke-width="1.6" fill="none"/>
<path d="M342.09 229V833 M372.50 229V833 M402.92 229V833 M433.33 229V833 M463.74 229V833 M494.15 229V833 M524.57 229V833 M554.98 229V833 M585.39 229V833 M615.81 229V833 M646.22 229V833 M676.63 229V833 M707.05 229V833 M737.46 229V833 M767.87 229V833 M798.28 229V833 M828.70 229V833 M859.11 229V833 M889.52 229V833 M919.94 229V833 M950.35 229V833 M980.76 229V833 M1011.18 229V833 M1041.59 229V833 M1072.00 229V833 M1102.41 229V833 M1132.83 229V833 M1163.24 229V833 M1193.65 229V833 M1224.07 229V833 M1254.48 229V833 M1284.89 229V833 M1315.31 229V833 M1345.72 229V833 M1376.13 229V833 M1406.54 229V833 M1436.96 229V833 M1467.37 229V833 M1497.78 229V833 M1528.20 229V833 M327 243.80H1545 M327 273.89H1545 M327 303.99H1545 M327 334.09H1545 M327 364.18H1545 M327 394.27H1545 M327 424.37H1545 M327 454.47H1545 M327 484.56H1545 M327 514.65H1545 M327 544.75H1545 M327 574.85H1545 M327 604.94H1545 M327 635.04H1545 M327 665.13H1545 M327 695.22H1545 M327 725.32H1545 M327 755.41H1545 M327 785.51H1545 M327 815.61H1545" stroke="rgba(40,255,250,0.36)" stroke-width="1.0" fill="none"/>
<clipPath id="tc"><polygon points="322.0,305.0 394.5,307.5 392.5,408.5 320.0,406.0"/><polygon points="625.0,303.7 693.0,300.7 698.0,402.5 630.0,405.5"/><polygon points="932.2,301.1 1000.3,300.3 1002.1,401.7 934.0,402.5"/><polygon points="1245.3,300.7 1312.8,302.0 1308.5,402.0 1241.0,400.7"/><polygon points="320.0,480.0 393.0,480.0 393.0,582.0 320.0,582.0"/><polygon points="467.2,481.8 535.3,481.8 535.6,583.2 467.5,583.2"/><polygon points="645.3,479.3 714.0,479.3 714.2,581.3 645.5,581.3"/><polygon points="768.3,478.3 837.7,478.3 837.9,580.7 768.5,580.7"/><polygon points="932.0,476.0 1000.5,476.0 1000.5,578.0 932.0,578.0"/><polygon points="1088.7,474.0 1156.8,474.0 1156.8,575.7 1088.7,575.7"/><polygon points="1238.2,475.8 1306.5,475.8 1306.5,578.7 1238.2,578.7"/><polygon points="1406.0,478.0 1473.6,478.0 1473.6,579.5 1406.0,579.5"/><polygon points="318.0,688.9 386.0,691.0 382.0,791.6 314.0,789.5"/><polygon points="656.8,699.8 724.2,696.0 728.6,796.8 661.2,800.6"/><polygon points="935.7,691.7 1001.4,688.6 1006.2,787.9 940.5,791.0"/><polygon points="1236.2,685.7 1304.7,685.7 1304.7,787.8 1236.2,787.8"/></clipPath>
<path d="M342.09 229V833 M372.50 229V833 M402.92 229V833 M433.33 229V833 M463.74 229V833 M494.15 229V833 M524.57 229V833 M554.98 229V833 M585.39 229V833 M615.81 229V833 M646.22 229V833 M676.63 229V833 M707.05 229V833 M737.46 229V833 M767.87 229V833 M798.28 229V833 M828.70 229V833 M859.11 229V833 M889.52 229V833 M919.94 229V833 M950.35 229V833 M980.76 229V833 M1011.18 229V833 M1041.59 229V833 M1072.00 229V833 M1102.41 229V833 M1132.83 229V833 M1163.24 229V833 M1193.65 229V833 M1224.07 229V833 M1254.48 229V833 M1284.89 229V833 M1315.31 229V833 M1345.72 229V833 M1376.13 229V833 M1406.54 229V833 M1436.96 229V833 M1467.37 229V833 M1497.78 229V833 M1528.20 229V833 M327 243.80H1545 M327 273.89H1545 M327 303.99H1545 M327 334.09H1545 M327 364.18H1545 M327 394.27H1545 M327 424.37H1545 M327 454.47H1545 M327 484.56H1545 M327 514.65H1545 M327 544.75H1545 M327 574.85H1545 M327 604.94H1545 M327 635.04H1545 M327 665.13H1545 M327 695.22H1545 M327 725.32H1545 M327 755.41H1545 M327 785.51H1545 M327 815.61H1545" stroke="rgba(30,255,250,0.32)" stroke-width="1.1" fill="none" clip-path="url(#tc)"/>
</g></svg>
<svg class="a" style="left:2px;top:276px" width="300" height="597" viewBox="2 276 300 597">
<rect x="28.5" y="450.5" width="247" height="247" fill="none" stroke="#9a9a9a" stroke-width="1"/>
<path d="M2 573.5H302" stroke="#e00000" stroke-width="1"/>
<path d="M151.5 410V490" stroke="#00d000" stroke-width="1"/>
<path d="M138.1 655.4L137.8 655.4M137.8 655.4L137.5 655.3M137.5 655.3L137.3 655.2M137.3 655.2L137.2 655.1M137.2 655.1L137.1 655.1M137.1 655.1L137.1 655.0M137.1 655.0L137.2 654.9M137.2 654.9L137.3 654.9M137.3 654.9L137.5 654.8M137.5 654.8L137.8 654.7M137.8 654.7L138.1 654.7M138.1 654.7L138.5 654.6M138.5 654.6L139.0 654.5M139.0 654.5L139.6 654.5M139.6 654.5L140.1 654.4M140.1 654.4L140.8 654.4M140.8 654.4L141.5 654.3M141.5 654.3L142.2 654.3M142.2 654.3L143.0 654.2M143.0 654.2L143.9 654.2M143.9 654.2L144.7 654.2M144.7 654.2L145.6 654.1M145.6 654.1L146.6 654.1M146.6 654.1L147.5 654.1M147.5 654.1L148.5 654.1M148.5 654.1L149.5 654.0M149.5 654.0L150.5 654.0M150.5 654.0L151.5 654.0M151.5 654.0L152.5 654.0M152.5 654.0L153.5 654.0M153.5 654.0L154.5 654.1M154.5 654.1L155.5 654.1M155.5 654.1L156.4 654.1M156.4 654.1L157.4 654.1M157.4 654.1L158.3 654.2M158.3 654.2L159.1 654.2M159.1 654.2L160.0 654.2M160.0 654.2L160.8 654.3M160.8 654.3L161.5 654.3M161.5 654.3L162.2 654.4M162.2 654.4L162.9 654.4M162.9 654.4L163.4 654.5M163.4 654.5L164.0 654.5M164.0 654.5L164.5 654.6M164.5 654.6L164.9 654.7M164.9 654.7L165.2 654.7M165.2 654.7L165.5 654.8M165.5 654.8L165.7 654.9M165.7 654.9L165.8 654.9M165.8 654.9L165.9 655.0M165.9 655.0L165.9 655.1M165.9 655.1L165.8 655.1M165.8 655.1L165.7 655.2M165.7 655.2L165.5 655.3M165.5 655.3L165.2 655.4M165.2 655.4L164.9 655.4M123.5 651.6L123.3 651.5M123.3 651.5L123.1 651.4M123.1 651.4L123.1 651.2M123.1 651.2L123.3 651.1M123.3 651.1L123.5 651.0M123.5 651.0L124.0 650.8M124.0 650.8L124.5 650.7M124.5 650.7L125.2 650.6M125.2 650.6L126.0 650.4M126.0 650.4L126.9 650.3M126.9 650.3L128.0 650.2M175.0 650.2L176.1 650.3M176.1 650.3L177.0 650.4M177.0 650.4L177.8 650.6M177.8 650.6L178.5 650.7M178.5 650.7L179.0 650.8M179.0 650.8L179.5 651.0M179.5 651.0L179.7 651.1M179.7 651.1L179.9 651.2M179.9 651.2L179.9 651.4M179.9 651.4L179.7 651.5M179.7 651.5L179.5 651.6M110.2 645.5L110.0 645.3M110.0 645.3L110.0 645.1M110.0 645.1L110.2 644.9M110.2 644.9L110.6 644.7M110.6 644.7L111.2 644.5M111.2 644.5L112.0 644.3M112.0 644.3L113.0 644.1M190.0 644.1L191.0 644.3M191.0 644.3L191.8 644.5M191.8 644.5L192.4 644.7M192.4 644.7L192.8 644.9M192.8 644.9L193.0 645.1M193.0 645.1L193.0 645.3M193.0 645.3L192.8 645.5M98.4 637.3L98.2 637.1M98.2 637.1L98.2 636.8M98.2 636.8L98.4 636.5M98.4 636.5L99.0 636.3M99.0 636.3L99.7 636.0M99.7 636.0L100.8 635.8M202.2 635.8L203.3 636.0M203.3 636.0L204.0 636.3M204.0 636.3L204.6 636.5M204.6 636.5L204.8 636.8M204.8 636.8L204.8 637.1M204.8 637.1L204.6 637.3M88.0 626.9L88.0 626.6M88.0 626.6L88.3 626.3M88.3 626.3L88.9 626.0M88.9 626.0L89.8 625.6M213.2 625.6L214.1 626.0M214.1 626.0L214.7 626.3M214.7 626.3L215.0 626.6M215.0 626.6L215.0 626.9M79.7 615.1L79.7 614.7M79.7 614.7L80.0 614.4M80.0 614.4L80.7 614.0M80.7 614.0L81.8 613.7M221.2 613.7L222.3 614.0M222.3 614.0L223.0 614.4M223.0 614.4L223.3 614.7M223.3 614.7L223.3 615.1M73.6 602.0L73.6 601.6M73.6 601.6L73.9 601.2M73.9 601.2L74.7 600.9M74.7 600.9L75.8 600.5M227.2 600.5L228.3 600.9M228.3 600.9L229.1 601.2M229.1 601.2L229.4 601.6M229.4 601.6L229.4 602.0M69.8 588.1L69.8 587.7M69.8 587.7L70.2 587.3M70.2 587.3L71.0 586.9M71.0 586.9L72.2 586.5M230.8 586.5L232.0 586.9M232.0 586.9L232.8 587.3M232.8 587.3L233.2 587.7M233.2 587.7L233.2 588.1M68.6 573.3L69.0 572.9M69.0 572.9L69.8 572.5M69.8 572.5L71.0 572.1M232.0 572.1L233.2 572.5M233.2 572.5L234.0 572.9M234.0 572.9L234.4 573.3M69.8 558.9L70.2 558.5M70.2 558.5L71.0 558.1M71.0 558.1L72.2 557.7M230.8 557.7L232.0 558.1M232.0 558.1L232.8 558.5M232.8 558.5L233.2 558.9M73.6 545.0L73.9 544.6M73.9 544.6L74.7 544.2M74.7 544.2L75.8 543.9M75.8 543.9L77.3 543.5M225.7 543.5L227.2 543.9M227.2 543.9L228.3 544.2M228.3 544.2L229.1 544.6M229.1 544.6L229.4 545.0M79.7 531.9L80.0 531.6M80.0 531.6L80.7 531.2M80.7 531.2L81.8 530.9M81.8 530.9L83.1 530.6M219.9 530.6L221.2 530.9M221.2 530.9L222.3 531.2M222.3 531.2L223.0 531.6M223.0 531.6L223.3 531.9M88.0 520.1L88.3 519.8M88.3 519.8L88.9 519.5M88.9 519.5L89.8 519.2M89.8 519.2L91.0 518.9M91.0 518.9L92.5 518.6M210.5 518.6L212.0 518.9M212.0 518.9L213.2 519.2M213.2 519.2L214.1 519.5M214.1 519.5L214.7 519.8M214.7 519.8L215.0 520.1M98.4 509.7L99.0 509.4M99.0 509.4L99.7 509.2M99.7 509.2L100.8 508.9M100.8 508.9L102.0 508.7M102.0 508.7L103.5 508.4M103.5 508.4L105.3 508.2M197.7 508.2L199.5 508.4M199.5 508.4L201.0 508.7M201.0 508.7L202.2 508.9M202.2 508.9L203.3 509.2M203.3 509.2L204.0 509.4M204.0 509.4L204.6 509.7M110.2 501.5L110.6 501.3M110.6 501.3L111.2 501.1M111.2 501.1L112.0 500.9M112.0 500.9L113.0 500.7M113.0 500.7L114.2 500.5M114.2 500.5L115.6 500.3M115.6 500.3L117.1 500.2M117.1 500.2L118.8 500.0M184.2 500.0L185.9 500.2M185.9 500.2L187.4 500.3M187.4 500.3L188.8 500.5M188.8 500.5L190.0 500.7M190.0 500.7L191.0 500.9M191.0 500.9L191.8 501.1M191.8 501.1L192.4 501.3M192.4 501.3L192.8 501.5M123.5 495.4L124.0 495.2M124.0 495.2L124.5 495.1M124.5 495.1L125.2 495.0M125.2 495.0L126.0 494.8M126.0 494.8L126.9 494.7M126.9 494.7L128.0 494.6M128.0 494.6L129.1 494.5M129.1 494.5L130.4 494.4M130.4 494.4L131.8 494.3M131.8 494.3L133.3 494.2M133.3 494.2L134.8 494.1M134.8 494.1L136.5 494.0M136.5 494.0L138.2 493.9M138.2 493.9L140.0 493.9M163.0 493.9L164.8 493.9M164.8 493.9L166.5 494.0M166.5 494.0L168.2 494.1M168.2 494.1L169.7 494.2M169.7 494.2L171.2 494.3M171.2 494.3L172.6 494.4M172.6 494.4L173.9 494.5M173.9 494.5L175.0 494.6M175.0 494.6L176.1 494.7M176.1 494.7L177.0 494.8M177.0 494.8L177.8 495.0M177.8 495.0L178.5 495.1M178.5 495.1L179.0 495.2M179.0 495.2L179.5 495.4M138.1 491.6L138.5 491.5M138.5 491.5L139.0 491.5M139.0 491.5L139.6 491.4M139.6 491.4L140.1 491.3M140.1 491.3L140.8 491.3M140.8 491.3L141.5 491.2M141.5 491.2L142.2 491.2M142.2 491.2L143.0 491.1M143.0 491.1L143.9 491.1M143.9 491.1L144.7 491.1M144.7 491.1L145.6 491.0M145.6 491.0L146.6 491.0M146.6 491.0L147.5 491.0M147.5 491.0L148.5 491.0M148.5 491.0L149.5 491.0M149.5 491.0L150.5 491.0M150.5 491.0L151.5 491.0M151.5 491.0L152.5 491.0M152.5 491.0L153.5 491.0M153.5 491.0L154.5 491.0M154.5 491.0L155.5 491.0M155.5 491.0L156.4 491.0M156.4 491.0L157.4 491.0M157.4 491.0L158.3 491.1M158.3 491.1L159.1 491.1M159.1 491.1L160.0 491.1M160.0 491.1L160.8 491.2M160.8 491.2L161.5 491.2M161.5 491.2L162.2 491.3M162.2 491.3L162.9 491.3M162.9 491.3L163.4 491.4M163.4 491.4L164.0 491.5M164.0 491.5L164.5 491.5M164.5 491.5L164.9 491.6M151.5 656.3L151.5 656.5M151.5 656.3L150.5 656.5M151.5 656.3L149.5 656.5M151.5 656.3L148.6 656.4M151.5 656.3L147.8 656.4M151.5 656.3L147.1 656.4M147.1 656.4L142.7 656.0M151.5 656.3L146.5 656.3M146.5 656.3L141.5 655.9M151.5 656.3L146.1 656.2M146.1 656.2L140.6 655.8M140.6 655.8L135.3 654.9M151.5 656.3L145.8 656.2M145.8 656.2L140.1 655.6M140.1 655.6L134.5 654.7M134.5 654.7L129.0 653.4M129.0 653.4L123.5 651.6M151.5 656.3L145.7 656.1M145.7 656.1L139.9 655.5M139.9 655.5L134.2 654.5M134.2 654.5L128.6 653.1M128.6 653.1L123.1 651.3M123.1 651.3L117.7 649.1M117.7 649.1L112.5 646.6M112.5 646.6L107.5 643.7M107.5 643.7L102.7 640.5M102.7 640.5L98.1 636.9M98.1 636.9L93.8 633.1M93.8 633.1L89.8 628.9M89.8 628.9L86.1 624.5M86.1 624.5L82.7 619.8M82.7 619.8L79.6 614.9M79.6 614.9L76.9 609.8M76.9 609.8L74.5 604.5M74.5 604.5L72.6 599.1M72.6 599.1L71.0 593.5M71.0 593.5L69.8 587.9M69.8 587.9L69.0 582.2M69.0 582.2L68.6 576.4M151.5 656.3L145.8 656.0M145.8 656.0L140.1 655.4M140.1 655.4L134.5 654.3M134.5 654.3L129.0 652.8M129.0 652.8L123.5 651.0M123.5 651.0L118.3 648.7M118.3 648.7L113.1 646.1M113.1 646.1L108.2 643.2M108.2 643.2L103.5 639.9M103.5 639.9L99.0 636.3M99.0 636.3L94.7 632.4M94.7 632.4L90.8 628.2M90.8 628.2L87.1 623.7M87.1 623.7L83.7 619.0M83.7 619.0L80.7 614.0M80.7 614.0L78.0 608.9M78.0 608.9L75.7 603.6M75.7 603.6L73.8 598.1M73.8 598.1L72.2 592.6M72.2 592.6L71.0 586.9M71.0 586.9L70.2 581.2M70.2 581.2L69.8 575.4M69.8 575.4L69.8 569.6M69.8 569.6L70.2 563.8M70.2 563.8L71.0 558.1M71.0 558.1L72.2 552.5M72.2 552.5L73.8 547.0M73.8 547.0L75.7 541.6M75.7 541.6L78.0 536.3M78.0 536.3L80.7 531.2M80.7 531.2L83.7 526.4M83.7 526.4L87.1 521.7M87.1 521.7L90.8 517.4M90.8 517.4L94.7 513.2M94.7 513.2L99.0 509.4M99.0 509.4L103.5 505.9M103.5 505.9L108.2 502.8M108.2 502.8L113.1 499.9M113.1 499.9L118.3 497.5M118.3 497.5L123.5 495.4M151.5 656.3L146.1 656.0M146.1 656.0L140.6 655.2M140.6 655.2L135.3 654.1M135.3 654.1L130.0 652.5M130.0 652.5L124.8 650.6M124.8 650.6L119.8 648.3M119.8 648.3L114.9 645.7M114.9 645.7L110.2 642.7M110.2 642.7L105.7 639.3M86.8 525.6L90.0 521.0M90.0 521.0L93.5 516.6M93.5 516.6L97.3 512.6M97.3 512.6L101.4 508.8M101.4 508.8L105.7 505.4M105.7 505.4L110.2 502.2M110.2 502.2L114.9 499.5M114.9 499.5L119.8 497.1M119.8 497.1L124.8 495.0M124.8 495.0L130.0 493.4M130.0 493.4L135.3 492.1M151.5 656.3L146.5 655.9M146.5 655.9L141.5 655.1M141.5 655.1L136.6 653.9M136.6 653.9L131.7 652.3M131.7 652.3L126.9 650.3M109.2 504.8L113.4 501.7M113.4 501.7L117.8 499.0M117.8 499.0L122.3 496.7M122.3 496.7L126.9 494.7M126.9 494.7L131.7 493.1M131.7 493.1L136.6 491.9M136.6 491.9L141.5 491.1M151.5 656.3L147.1 655.8M147.1 655.8L142.7 655.0M142.7 655.0L138.3 653.7M138.3 653.7L134.0 652.1M121.7 498.6L125.6 496.3M125.6 496.3L129.8 494.4M129.8 494.4L134.0 492.9M134.0 492.9L138.3 491.7M138.3 491.7L142.7 491.0M151.5 656.3L147.8 655.8M147.8 655.8L144.1 654.9M144.1 654.9L140.4 653.6M129.8 496.1L133.3 494.2M133.3 494.2L136.8 492.7M136.8 492.7L140.4 491.6M140.4 491.6L144.1 490.9M144.1 490.9L147.8 490.6M151.5 656.3L148.6 655.7M148.6 655.7L145.7 654.8M145.7 654.8L142.9 653.4M137.3 494.0L140.1 492.5M140.1 492.5L142.9 491.5M142.9 491.5L145.7 490.8M145.7 490.8L148.6 490.6M151.5 656.3L149.5 655.7M149.5 655.7L147.5 654.7M147.5 654.7L145.6 653.4M141.8 493.8L143.7 492.4M143.7 492.4L145.6 491.4M145.6 491.4L147.5 490.8M147.5 490.8L149.5 490.5M151.5 656.3L150.5 655.7M150.5 655.7L149.5 654.7M149.5 654.7L148.5 653.3M146.6 493.7L147.5 492.3M147.5 492.3L148.5 491.3M148.5 491.3L149.5 490.7M149.5 490.7L150.5 490.5M151.5 656.3L151.5 655.7M151.5 655.7L151.5 654.7M151.5 654.7L151.5 653.3M151.5 493.7L151.5 492.3M151.5 492.3L151.5 491.3M151.5 491.3L151.5 490.7M151.5 490.7L151.5 490.5M151.5 656.3L152.5 655.7M152.5 655.7L153.5 654.7M153.5 654.7L154.5 653.3M156.4 493.7L155.5 492.3M155.5 492.3L154.5 491.3M154.5 491.3L153.5 490.7M153.5 490.7L152.5 490.5M151.5 656.3L153.5 655.7M153.5 655.7L155.5 654.7M155.5 654.7L157.4 653.4M161.2 493.8L159.3 492.4M159.3 492.4L157.4 491.4M157.4 491.4L155.5 490.8M155.5 490.8L153.5 490.5M151.5 656.3L154.4 655.7M154.4 655.7L157.3 654.8M157.3 654.8L160.1 653.4M165.7 494.0L162.9 492.5M162.9 492.5L160.1 491.5M160.1 491.5L157.3 490.8M157.3 490.8L154.4 490.6M151.5 656.3L155.2 655.8M155.2 655.8L158.9 654.9M158.9 654.9L162.6 653.6M173.2 496.1L169.7 494.2M169.7 494.2L166.2 492.7M166.2 492.7L162.6 491.6M162.6 491.6L158.9 490.9M158.9 490.9L155.2 490.6M151.5 656.3L155.9 655.8M155.9 655.8L160.3 655.0M160.3 655.0L164.7 653.7M164.7 653.7L169.0 652.1M181.3 498.6L177.4 496.3M177.4 496.3L173.2 494.4M173.2 494.4L169.0 492.9M169.0 492.9L164.7 491.7M164.7 491.7L160.3 491.0M151.5 656.3L156.5 655.9M156.5 655.9L161.5 655.1M161.5 655.1L166.4 653.9M166.4 653.9L171.3 652.3M171.3 652.3L176.1 650.3M193.8 504.8L189.6 501.7M189.6 501.7L185.2 499.0M185.2 499.0L180.7 496.7M180.7 496.7L176.1 494.7M176.1 494.7L171.3 493.1M171.3 493.1L166.4 491.9M166.4 491.9L161.5 491.1M151.5 656.3L156.9 656.0M156.9 656.0L162.4 655.2M162.4 655.2L167.7 654.1M167.7 654.1L173.0 652.5M173.0 652.5L178.2 650.6M178.2 650.6L183.2 648.3M183.2 648.3L188.1 645.7M188.1 645.7L192.8 642.7M192.8 642.7L197.3 639.3M216.2 525.6L213.0 521.0M213.0 521.0L209.5 516.6M209.5 516.6L205.7 512.6M205.7 512.6L201.6 508.8M201.6 508.8L197.3 505.4M197.3 505.4L192.8 502.2M192.8 502.2L188.1 499.5M188.1 499.5L183.2 497.1M183.2 497.1L178.2 495.0M178.2 495.0L173.0 493.4M173.0 493.4L167.7 492.1M151.5 656.3L157.2 656.0M157.2 656.0L162.9 655.4M162.9 655.4L168.5 654.3M168.5 654.3L174.0 652.8M174.0 652.8L179.5 651.0M179.5 651.0L184.7 648.7M184.7 648.7L189.9 646.1M189.9 646.1L194.8 643.2M194.8 643.2L199.5 639.9M199.5 639.9L204.0 636.3M204.0 636.3L208.3 632.4M208.3 632.4L212.2 628.2M212.2 628.2L215.9 623.7M215.9 623.7L219.3 619.0M219.3 619.0L222.3 614.0M222.3 614.0L225.0 608.9M225.0 608.9L227.3 603.6M227.3 603.6L229.2 598.1M229.2 598.1L230.8 592.6M230.8 592.6L232.0 586.9M232.0 586.9L232.8 581.2M232.8 581.2L233.2 575.4M233.2 575.4L233.2 569.6M233.2 569.6L232.8 563.8M232.8 563.8L232.0 558.1M232.0 558.1L230.8 552.5M230.8 552.5L229.2 547.0M229.2 547.0L227.3 541.6M227.3 541.6L225.0 536.3M225.0 536.3L222.3 531.2M222.3 531.2L219.3 526.4M219.3 526.4L215.9 521.7M215.9 521.7L212.2 517.4M212.2 517.4L208.3 513.2M208.3 513.2L204.0 509.4M204.0 509.4L199.5 505.9M199.5 505.9L194.8 502.8M194.8 502.8L189.9 499.9M189.9 499.9L184.7 497.5M184.7 497.5L179.5 495.4M151.5 656.3L157.3 656.1M157.3 656.1L163.1 655.5M163.1 655.5L168.8 654.5M168.8 654.5L174.4 653.1M174.4 653.1L179.9 651.3M179.9 651.3L185.3 649.1M185.3 649.1L190.5 646.6M190.5 646.6L195.5 643.7M195.5 643.7L200.3 640.5M200.3 640.5L204.9 636.9M204.9 636.9L209.2 633.1M209.2 633.1L213.2 628.9M213.2 628.9L216.9 624.5M216.9 624.5L220.3 619.8M220.3 619.8L223.4 614.9M223.4 614.9L226.1 609.8M226.1 609.8L228.5 604.5M228.5 604.5L230.4 599.1M230.4 599.1L232.0 593.5M232.0 593.5L233.2 587.9M233.2 587.9L234.0 582.2M234.0 582.2L234.4 576.4M234.4 576.4L234.4 570.6M151.5 656.3L157.2 656.2M157.2 656.2L162.9 655.6M162.9 655.6L168.5 654.7M168.5 654.7L174.0 653.4M174.0 653.4L179.5 651.6M151.5 656.3L156.9 656.2M156.9 656.2L162.4 655.8M162.4 655.8L167.7 654.9M151.5 656.3L156.5 656.3M156.5 656.3L161.5 655.9M151.5 656.3L155.9 656.4M155.9 656.4L160.3 656.0M151.5 656.3L155.2 656.4M151.5 656.3L154.4 656.4M151.5 656.3L153.5 656.5M151.5 656.3L152.5 656.5" stroke="#4a9090" stroke-width="0.8" fill="none" opacity="0.07"/><path d="M128.0 650.2L129.1 650.1M129.1 650.1L130.4 650.0M130.4 650.0L131.8 649.9M131.8 649.9L133.3 649.8M133.3 649.8L134.8 649.7M134.8 649.7L136.5 649.6M136.5 649.6L138.2 649.6M138.2 649.6L140.0 649.5M140.0 649.5L141.8 649.4M141.8 649.4L143.7 649.4M143.7 649.4L145.6 649.4M145.6 649.4L147.5 649.3M147.5 649.3L149.5 649.3M149.5 649.3L151.5 649.3M151.5 649.3L153.5 649.3M153.5 649.3L155.5 649.3M155.5 649.3L157.4 649.4M157.4 649.4L159.3 649.4M159.3 649.4L161.2 649.4M161.2 649.4L163.0 649.5M163.0 649.5L164.8 649.6M164.8 649.6L166.5 649.6M166.5 649.6L168.2 649.7M168.2 649.7L169.7 649.8M169.7 649.8L171.2 649.9M171.2 649.9L172.6 650.0M172.6 650.0L173.9 650.1M173.9 650.1L175.0 650.2M113.0 644.1L114.2 643.9M114.2 643.9L115.6 643.8M115.6 643.8L117.1 643.6M117.1 643.6L118.8 643.4M118.8 643.4L120.7 643.3M120.7 643.3L122.7 643.1M122.7 643.1L124.8 643.0M124.8 643.0L127.1 642.9M127.1 642.9L129.5 642.8M129.5 642.8L132.0 642.6M132.0 642.6L134.6 642.6M134.6 642.6L137.3 642.5M137.3 642.5L140.1 642.4M140.1 642.4L142.9 642.4M160.1 642.4L162.9 642.4M162.9 642.4L165.7 642.5M165.7 642.5L168.4 642.6M168.4 642.6L171.0 642.6M171.0 642.6L173.5 642.8M173.5 642.8L175.9 642.9M175.9 642.9L178.2 643.0M178.2 643.0L180.3 643.1M180.3 643.1L182.3 643.3M182.3 643.3L184.2 643.4M184.2 643.4L185.9 643.6M185.9 643.6L187.4 643.8M187.4 643.8L188.8 643.9M188.8 643.9L190.0 644.1M100.8 635.8L102.0 635.5M102.0 635.5L103.5 635.3M103.5 635.3L105.3 635.1M105.3 635.1L107.3 634.8M107.3 634.8L109.5 634.6M109.5 634.6L111.9 634.4M111.9 634.4L114.4 634.2M114.4 634.2L117.2 634.1M185.8 634.1L188.6 634.2M188.6 634.2L191.1 634.4M191.1 634.4L193.5 634.6M193.5 634.6L195.7 634.8M195.7 634.8L197.7 635.1M197.7 635.1L199.5 635.3M199.5 635.3L201.0 635.5M201.0 635.5L202.2 635.8M89.8 625.6L91.0 625.4M91.0 625.4L92.5 625.1M92.5 625.1L94.4 624.8M94.4 624.8L96.4 624.5M96.4 624.5L98.8 624.2M98.8 624.2L101.4 624.0M101.4 624.0L104.2 623.8M198.8 623.8L201.6 624.0M201.6 624.0L204.2 624.2M204.2 624.2L206.6 624.5M206.6 624.5L208.6 624.8M208.6 624.8L210.5 625.1M210.5 625.1L212.0 625.4M212.0 625.4L213.2 625.6M81.8 613.7L83.1 613.3M83.1 613.3L84.9 613.0M84.9 613.0L86.9 612.7M86.9 612.7L89.2 612.4M89.2 612.4L91.9 612.1M91.9 612.1L94.9 611.8M208.1 611.8L211.1 612.1M211.1 612.1L213.7 612.4M213.7 612.4L216.1 612.7M216.1 612.7L218.1 613.0M218.1 613.0L219.9 613.3M219.9 613.3L221.2 613.7M75.8 600.5L77.3 600.1M77.3 600.1L79.2 599.8M79.2 599.8L81.4 599.4M81.4 599.4L84.0 599.1M84.0 599.1L86.8 598.8M216.2 598.8L219.0 599.1M219.0 599.1L221.6 599.4M221.6 599.4L223.8 599.8M223.8 599.8L225.7 600.1M225.7 600.1L227.2 600.5M72.2 586.5L73.8 586.1M73.8 586.1L75.7 585.7M75.7 585.7L78.0 585.4M78.0 585.4L80.7 585.0M80.7 585.0L83.7 584.7M219.3 584.7L222.3 585.0M222.3 585.0L225.0 585.4M225.0 585.4L227.3 585.7M227.3 585.7L229.2 586.1M229.2 586.1L230.8 586.5M71.0 572.1L72.6 571.7M72.6 571.7L74.5 571.3M74.5 571.3L76.9 571.0M76.9 571.0L79.6 570.6M79.6 570.6L82.7 570.3M220.3 570.3L223.4 570.6M223.4 570.6L226.1 571.0M226.1 571.0L228.5 571.3M228.5 571.3L230.4 571.7M230.4 571.7L232.0 572.1M72.2 557.7L73.8 557.4M73.8 557.4L75.7 557.0M75.7 557.0L78.0 556.6M78.0 556.6L80.7 556.3M80.7 556.3L83.7 555.9M219.3 555.9L222.3 556.3M222.3 556.3L225.0 556.6M225.0 556.6L227.3 557.0M227.3 557.0L229.2 557.4M229.2 557.4L230.8 557.7M77.3 543.5L79.2 543.1M79.2 543.1L81.4 542.8M81.4 542.8L84.0 542.5M84.0 542.5L86.8 542.1M86.8 542.1L90.0 541.8M213.0 541.8L216.2 542.1M216.2 542.1L219.0 542.5M219.0 542.5L221.6 542.8M221.6 542.8L223.8 543.1M223.8 543.1L225.7 543.5M83.1 530.6L84.9 530.2M84.9 530.2L86.9 529.9M86.9 529.9L89.2 529.6M89.2 529.6L91.9 529.3M91.9 529.3L94.9 529.0M94.9 529.0L98.1 528.7M204.9 528.7L208.1 529.0M208.1 529.0L211.1 529.3M211.1 529.3L213.7 529.6M213.7 529.6L216.1 529.9M216.1 529.9L218.1 530.2M218.1 530.2L219.9 530.6M92.5 518.6L94.4 518.3M94.4 518.3L96.4 518.1M96.4 518.1L98.8 517.8M98.8 517.8L101.4 517.5M101.4 517.5L104.2 517.3M104.2 517.3L107.3 517.1M107.3 517.1L110.6 516.9M192.4 516.9L195.7 517.1M195.7 517.1L198.8 517.3M198.8 517.3L201.6 517.5M201.6 517.5L204.2 517.8M204.2 517.8L206.6 518.1M206.6 518.1L208.6 518.3M208.6 518.3L210.5 518.6M105.3 508.2L107.3 508.0M107.3 508.0L109.5 507.8M109.5 507.8L111.9 507.6M111.9 507.6L114.4 507.4M114.4 507.4L117.2 507.2M117.2 507.2L120.1 507.1M120.1 507.1L123.2 506.9M123.2 506.9L126.5 506.8M126.5 506.8L129.8 506.7M129.8 506.7L133.3 506.6M169.7 506.6L173.2 506.7M173.2 506.7L176.5 506.8M176.5 506.8L179.8 506.9M179.8 506.9L182.9 507.1M182.9 507.1L185.8 507.2M185.8 507.2L188.6 507.4M188.6 507.4L191.1 507.6M191.1 507.6L193.5 507.8M193.5 507.8L195.7 508.0M195.7 508.0L197.7 508.2M118.8 500.0L120.7 499.9M120.7 499.9L122.7 499.7M122.7 499.7L124.8 499.6M124.8 499.6L127.1 499.5M127.1 499.5L129.5 499.3M129.5 499.3L132.0 499.2M132.0 499.2L134.6 499.2M134.6 499.2L137.3 499.1M137.3 499.1L140.1 499.0M140.1 499.0L142.9 499.0M142.9 499.0L145.7 498.9M145.7 498.9L148.6 498.9M148.6 498.9L151.5 498.9M151.5 498.9L154.4 498.9M154.4 498.9L157.3 498.9M157.3 498.9L160.1 499.0M160.1 499.0L162.9 499.0M162.9 499.0L165.7 499.1M165.7 499.1L168.4 499.2M168.4 499.2L171.0 499.2M171.0 499.2L173.5 499.3M173.5 499.3L175.9 499.5M175.9 499.5L178.2 499.6M178.2 499.6L180.3 499.7M180.3 499.7L182.3 499.9M182.3 499.9L184.2 500.0M140.0 493.9L141.8 493.8M141.8 493.8L143.7 493.8M143.7 493.8L145.6 493.8M145.6 493.8L147.5 493.7M147.5 493.7L149.5 493.7M149.5 493.7L151.5 493.7M151.5 493.7L153.5 493.7M153.5 493.7L155.5 493.7M155.5 493.7L157.4 493.8M157.4 493.8L159.3 493.8M159.3 493.8L161.2 493.8M161.2 493.8L163.0 493.9M105.7 639.3L101.4 635.7M101.4 635.7L97.3 631.7M97.3 631.7L93.5 627.4M93.5 627.4L90.0 622.9M90.0 622.9L86.8 618.2M86.8 618.2L84.0 613.2M84.0 613.2L81.4 608.0M81.4 608.0L79.2 602.7M79.2 602.7L77.3 597.2M77.3 597.2L75.8 591.6M75.8 591.6L74.7 585.9M74.7 585.9L73.9 580.2M73.9 580.2L73.6 574.4M73.6 574.4L73.6 568.6M73.6 568.6L73.9 562.9M73.9 562.9L74.7 557.2M74.7 557.2L75.8 551.5M75.8 551.5L77.3 546.0M77.3 546.0L79.2 540.6M79.2 540.6L81.4 535.4M81.4 535.4L84.0 530.4M84.0 530.4L86.8 525.6M126.9 650.3L122.3 648.0M122.3 648.0L117.8 645.2M117.8 645.2L113.4 642.2M113.4 642.2L109.2 638.8M109.2 638.8L105.3 635.1M105.3 635.1L101.6 631.0M101.6 631.0L98.1 626.8M98.1 626.8L94.9 622.2M94.9 622.2L91.9 617.4M91.9 617.4L89.2 612.4M89.2 612.4L86.9 607.2M86.9 607.2L84.9 601.8M84.9 601.8L83.1 596.3M83.1 596.3L81.8 590.7M81.8 590.7L80.7 585.0M80.7 585.0L80.0 579.3M80.0 579.3L79.7 573.5M79.7 573.5L79.7 567.7M79.7 567.7L80.0 562.0M80.0 562.0L80.7 556.3M80.7 556.3L81.8 550.7M81.8 550.7L83.1 545.2M83.1 545.2L84.9 539.8M84.9 539.8L86.9 534.6M86.9 534.6L89.2 529.6M89.2 529.6L91.9 524.8M91.9 524.8L94.9 520.2M94.9 520.2L98.1 515.9M98.1 515.9L101.6 511.9M101.6 511.9L105.3 508.2M105.3 508.2L109.2 504.8M134.0 652.1L129.8 650.0M129.8 650.0L125.6 647.6M125.6 647.6L121.7 644.9M121.7 644.9L117.8 641.7M117.8 641.7L114.1 638.3M114.1 638.3L110.6 634.5M110.6 634.5L107.3 630.5M107.3 630.5L104.2 626.1M104.2 626.1L101.4 621.5M94.4 533.9L96.4 528.9M96.4 528.9L98.8 524.1M98.8 524.1L101.4 519.6M101.4 519.6L104.2 515.3M104.2 515.3L107.3 511.4M107.3 511.4L110.6 507.7M110.6 507.7L114.1 504.3M114.1 504.3L117.8 501.3M117.8 501.3L121.7 498.6M140.4 653.6L136.8 651.9M136.8 651.9L133.3 649.8M133.3 649.8L129.8 647.3M129.8 647.3L126.5 644.5M126.5 644.5L123.2 641.4M123.2 641.4L120.1 637.9M120.1 637.9L117.2 634.1M109.5 519.0L111.9 514.8M111.9 514.8L114.4 510.9M114.4 510.9L117.2 507.2M117.2 507.2L120.1 503.9M120.1 503.9L123.2 500.9M123.2 500.9L126.5 498.3M126.5 498.3L129.8 496.1M142.9 653.4L140.1 651.7M140.1 651.7L137.3 649.6M137.3 649.6L134.6 647.1M134.6 647.1L132.0 644.3M132.0 644.3L129.5 641.1M129.5 641.1L127.1 637.5M122.7 510.5L124.8 506.9M124.8 506.9L127.1 503.6M127.1 503.6L129.5 500.6M129.5 500.6L132.0 498.0M132.0 498.0L134.6 495.8M134.6 495.8L137.3 494.0M145.6 653.4L143.7 651.6M143.7 651.6L141.8 649.4M141.8 649.4L140.0 646.9M140.0 646.9L138.2 644.1M138.2 644.1L136.5 640.8M133.3 506.6L134.8 503.3M134.8 503.3L136.5 500.4M136.5 500.4L138.2 497.8M138.2 497.8L140.0 495.6M140.0 495.6L141.8 493.8M148.5 653.3L147.5 651.5M147.5 651.5L146.6 649.4M146.6 649.4L145.6 646.8M145.6 646.8L144.7 643.9M142.2 506.4L143.0 503.2M143.0 503.2L143.9 500.3M143.9 500.3L144.7 497.7M144.7 497.7L145.6 495.5M145.6 495.5L146.6 493.7M151.5 653.3L151.5 651.5M151.5 651.5L151.5 649.3M151.5 649.3L151.5 646.8M151.5 646.8L151.5 643.9M151.5 503.1L151.5 500.2M151.5 500.2L151.5 497.7M151.5 497.7L151.5 495.5M151.5 495.5L151.5 493.7M154.5 653.3L155.5 651.5M155.5 651.5L156.4 649.4M156.4 649.4L157.4 646.8M157.4 646.8L158.3 643.9M160.8 506.4L160.0 503.2M160.0 503.2L159.1 500.3M159.1 500.3L158.3 497.7M158.3 497.7L157.4 495.5M157.4 495.5L156.4 493.7M157.4 653.4L159.3 651.6M159.3 651.6L161.2 649.4M161.2 649.4L163.0 646.9M163.0 646.9L164.8 644.1M164.8 644.1L166.5 640.8M169.7 506.6L168.2 503.3M168.2 503.3L166.5 500.4M166.5 500.4L164.8 497.8M164.8 497.8L163.0 495.6M163.0 495.6L161.2 493.8M160.1 653.4L162.9 651.7M162.9 651.7L165.7 649.6M165.7 649.6L168.4 647.1M168.4 647.1L171.0 644.3M171.0 644.3L173.5 641.1M173.5 641.1L175.9 637.5M180.3 510.5L178.2 506.9M178.2 506.9L175.9 503.6M175.9 503.6L173.5 500.6M173.5 500.6L171.0 498.0M171.0 498.0L168.4 495.8M168.4 495.8L165.7 494.0M162.6 653.6L166.2 651.9M166.2 651.9L169.7 649.8M169.7 649.8L173.2 647.3M173.2 647.3L176.5 644.5M176.5 644.5L179.8 641.4M179.8 641.4L182.9 637.9M182.9 637.9L185.8 634.1M193.5 519.0L191.1 514.8M191.1 514.8L188.6 510.9M188.6 510.9L185.8 507.2M185.8 507.2L182.9 503.9M182.9 503.9L179.8 500.9M179.8 500.9L176.5 498.3M176.5 498.3L173.2 496.1M169.0 652.1L173.2 650.0M173.2 650.0L177.4 647.6M177.4 647.6L181.3 644.9M181.3 644.9L185.2 641.7M185.2 641.7L188.9 638.3M188.9 638.3L192.4 634.5M192.4 634.5L195.7 630.5M195.7 630.5L198.8 626.1M198.8 626.1L201.6 621.5M208.6 533.9L206.6 528.9M206.6 528.9L204.2 524.1M204.2 524.1L201.6 519.6M201.6 519.6L198.8 515.3M198.8 515.3L195.7 511.4M195.7 511.4L192.4 507.7M192.4 507.7L188.9 504.3M188.9 504.3L185.2 501.3M185.2 501.3L181.3 498.6M176.1 650.3L180.7 648.0M180.7 648.0L185.2 645.2M185.2 645.2L189.6 642.2M189.6 642.2L193.8 638.8M193.8 638.8L197.7 635.1M197.7 635.1L201.4 631.0M201.4 631.0L204.9 626.8M204.9 626.8L208.1 622.2M208.1 622.2L211.1 617.4M211.1 617.4L213.7 612.4M213.7 612.4L216.1 607.2M216.1 607.2L218.1 601.8M218.1 601.8L219.9 596.3M219.9 596.3L221.2 590.7M221.2 590.7L222.3 585.0M222.3 585.0L223.0 579.3M223.0 579.3L223.3 573.5M223.3 573.5L223.3 567.7M223.3 567.7L223.0 562.0M223.0 562.0L222.3 556.3M222.3 556.3L221.2 550.7M221.2 550.7L219.9 545.2M219.9 545.2L218.1 539.8M218.1 539.8L216.1 534.6M216.1 534.6L213.7 529.6M213.7 529.6L211.1 524.8M211.1 524.8L208.1 520.2M208.1 520.2L204.9 515.9M204.9 515.9L201.4 511.9M201.4 511.9L197.7 508.2M197.7 508.2L193.8 504.8M197.3 639.3L201.6 635.7M201.6 635.7L205.7 631.7M205.7 631.7L209.5 627.4M209.5 627.4L213.0 622.9M213.0 622.9L216.2 618.2M216.2 618.2L219.0 613.2M219.0 613.2L221.6 608.0M221.6 608.0L223.8 602.7M223.8 602.7L225.7 597.2M225.7 597.2L227.2 591.6M227.2 591.6L228.3 585.9M228.3 585.9L229.1 580.2M229.1 580.2L229.4 574.4M229.4 574.4L229.4 568.6M229.4 568.6L229.1 562.9M229.1 562.9L228.3 557.2M228.3 557.2L227.2 551.5M227.2 551.5L225.7 546.0M225.7 546.0L223.8 540.6M223.8 540.6L221.6 535.4M221.6 535.4L219.0 530.4M219.0 530.4L216.2 525.6" stroke="#4a9090" stroke-width="0.8" fill="none" opacity="0.22"/><path d="M142.9 642.4L145.7 642.3M145.7 642.3L148.6 642.3M148.6 642.3L151.5 642.3M151.5 642.3L154.4 642.3M154.4 642.3L157.3 642.3M157.3 642.3L160.1 642.4M117.2 634.1L120.1 633.9M120.1 633.9L123.2 633.8M123.2 633.8L126.5 633.6M126.5 633.6L129.8 633.5M129.8 633.5L133.3 633.4M133.3 633.4L136.8 633.3M136.8 633.3L140.4 633.3M140.4 633.3L144.1 633.2M144.1 633.2L147.8 633.2M147.8 633.2L151.5 633.2M151.5 633.2L155.2 633.2M155.2 633.2L158.9 633.2M158.9 633.2L162.6 633.3M162.6 633.3L166.2 633.3M166.2 633.3L169.7 633.4M169.7 633.4L173.2 633.5M173.2 633.5L176.5 633.6M176.5 633.6L179.8 633.8M179.8 633.8L182.9 633.9M182.9 633.9L185.8 634.1M104.2 623.8L107.3 623.5M107.3 623.5L110.6 623.3M110.6 623.3L114.1 623.1M114.1 623.1L117.8 623.0M117.8 623.0L121.7 622.8M121.7 622.8L125.6 622.7M125.6 622.7L129.8 622.6M129.8 622.6L134.0 622.5M134.0 622.5L138.3 622.4M138.3 622.4L142.7 622.3M142.7 622.3L147.1 622.3M147.1 622.3L151.5 622.3M151.5 622.3L155.9 622.3M155.9 622.3L160.3 622.3M160.3 622.3L164.7 622.4M164.7 622.4L169.0 622.5M169.0 622.5L173.2 622.6M173.2 622.6L177.4 622.7M177.4 622.7L181.3 622.8M181.3 622.8L185.2 623.0M185.2 623.0L188.9 623.1M188.9 623.1L192.4 623.3M192.4 623.3L195.7 623.5M195.7 623.5L198.8 623.8M94.9 611.8L98.1 611.5M98.1 611.5L101.6 611.3M101.6 611.3L105.3 611.1M105.3 611.1L109.2 610.8M109.2 610.8L113.4 610.6M113.4 610.6L117.8 610.5M117.8 610.5L122.3 610.3M122.3 610.3L126.9 610.2M126.9 610.2L131.7 610.1M131.7 610.1L136.6 610.0M136.6 610.0L141.5 609.9M141.5 609.9L146.5 609.9M146.5 609.9L151.5 609.9M151.5 609.9L156.5 609.9M156.5 609.9L161.5 609.9M161.5 609.9L166.4 610.0M166.4 610.0L171.3 610.1M171.3 610.1L176.1 610.2M176.1 610.2L180.7 610.3M180.7 610.3L185.2 610.5M185.2 610.5L189.6 610.6M189.6 610.6L193.8 610.8M193.8 610.8L197.7 611.1M197.7 611.1L201.4 611.3M201.4 611.3L204.9 611.5M204.9 611.5L208.1 611.8M86.8 598.8L90.0 598.5M90.0 598.5L93.5 598.2M93.5 598.2L97.3 597.9M97.3 597.9L101.4 597.7M101.4 597.7L105.7 597.4M105.7 597.4L110.2 597.2M110.2 597.2L114.9 597.0M114.9 597.0L119.8 596.8M119.8 596.8L124.8 596.7M124.8 596.7L130.0 596.6M130.0 596.6L135.3 596.5M135.3 596.5L140.6 596.4M140.6 596.4L146.1 596.4M146.1 596.4L151.5 596.4M151.5 596.4L156.9 596.4M156.9 596.4L162.4 596.4M162.4 596.4L167.7 596.5M167.7 596.5L173.0 596.6M173.0 596.6L178.2 596.7M178.2 596.7L183.2 596.8M183.2 596.8L188.1 597.0M188.1 597.0L192.8 597.2M192.8 597.2L197.3 597.4M197.3 597.4L201.6 597.7M201.6 597.7L205.7 597.9M205.7 597.9L209.5 598.2M209.5 598.2L213.0 598.5M213.0 598.5L216.2 598.8M83.7 584.7L87.1 584.4M87.1 584.4L90.8 584.1M90.8 584.1L94.7 583.8M94.7 583.8L99.0 583.5M99.0 583.5L103.5 583.3M103.5 583.3L108.2 583.0M108.2 583.0L113.1 582.8M113.1 582.8L118.3 582.7M118.3 582.7L123.5 582.5M123.5 582.5L129.0 582.4M129.0 582.4L134.5 582.3M134.5 582.3L140.1 582.2M140.1 582.2L145.8 582.2M145.8 582.2L151.5 582.2M151.5 582.2L157.2 582.2M157.2 582.2L162.9 582.2M162.9 582.2L168.5 582.3M168.5 582.3L174.0 582.4M174.0 582.4L179.5 582.5M179.5 582.5L184.7 582.7M184.7 582.7L189.9 582.8M189.9 582.8L194.8 583.0M194.8 583.0L199.5 583.3M199.5 583.3L204.0 583.5M204.0 583.5L208.3 583.8M208.3 583.8L212.2 584.1M212.2 584.1L215.9 584.4M215.9 584.4L219.3 584.7M82.7 570.3L86.1 569.9M86.1 569.9L89.8 569.6M89.8 569.6L93.8 569.3M93.8 569.3L98.1 569.1M98.1 569.1L102.7 568.8M102.7 568.8L107.5 568.6M107.5 568.6L112.5 568.4M112.5 568.4L117.7 568.2M117.7 568.2L123.1 568.1M123.1 568.1L128.6 567.9M128.6 567.9L134.2 567.8M134.2 567.8L139.9 567.8M139.9 567.8L145.7 567.7M145.7 567.7L151.5 567.7M151.5 567.7L157.3 567.7M157.3 567.7L163.1 567.8M163.1 567.8L168.8 567.8M168.8 567.8L174.4 567.9M174.4 567.9L179.9 568.1M179.9 568.1L185.3 568.2M185.3 568.2L190.5 568.4M190.5 568.4L195.5 568.6M195.5 568.6L200.3 568.8M200.3 568.8L204.9 569.1M204.9 569.1L209.2 569.3M209.2 569.3L213.2 569.6M213.2 569.6L216.9 569.9M216.9 569.9L220.3 570.3M83.7 555.9L87.1 555.6M87.1 555.6L90.8 555.3M90.8 555.3L94.7 555.0M94.7 555.0L99.0 554.8M99.0 554.8L103.5 554.5M103.5 554.5L108.2 554.3M108.2 554.3L113.1 554.1M113.1 554.1L118.3 553.9M118.3 553.9L123.5 553.8M123.5 553.8L129.0 553.6M129.0 553.6L134.5 553.5M134.5 553.5L140.1 553.5M140.1 553.5L145.8 553.4M145.8 553.4L151.5 553.4M151.5 553.4L157.2 553.4M157.2 553.4L162.9 553.5M162.9 553.5L168.5 553.5M168.5 553.5L174.0 553.6M174.0 553.6L179.5 553.8M179.5 553.8L184.7 553.9M184.7 553.9L189.9 554.1M189.9 554.1L194.8 554.3M194.8 554.3L199.5 554.5M199.5 554.5L204.0 554.8M204.0 554.8L208.3 555.0M208.3 555.0L212.2 555.3M212.2 555.3L215.9 555.6M215.9 555.6L219.3 555.9M90.0 541.8L93.5 541.5M93.5 541.5L97.3 541.3M97.3 541.3L101.4 541.0M101.4 541.0L105.7 540.8M105.7 540.8L110.2 540.6M110.2 540.6L114.9 540.4M114.9 540.4L119.8 540.2M119.8 540.2L124.8 540.1M124.8 540.1L130.0 540.0M130.0 540.0L135.3 539.9M135.3 539.9L140.6 539.8M140.6 539.8L146.1 539.8M146.1 539.8L151.5 539.7M151.5 539.7L156.9 539.8M156.9 539.8L162.4 539.8M162.4 539.8L167.7 539.9M167.7 539.9L173.0 540.0M173.0 540.0L178.2 540.1M178.2 540.1L183.2 540.2M183.2 540.2L188.1 540.4M188.1 540.4L192.8 540.6M192.8 540.6L197.3 540.8M197.3 540.8L201.6 541.0M201.6 541.0L205.7 541.3M205.7 541.3L209.5 541.5M209.5 541.5L213.0 541.8M98.1 528.7L101.6 528.5M101.6 528.5L105.3 528.3M105.3 528.3L109.2 528.0M109.2 528.0L113.4 527.8M113.4 527.8L117.8 527.7M117.8 527.7L122.3 527.5M122.3 527.5L126.9 527.4M126.9 527.4L131.7 527.3M131.7 527.3L136.6 527.2M136.6 527.2L141.5 527.1M141.5 527.1L146.5 527.1M146.5 527.1L151.5 527.1M151.5 527.1L156.5 527.1M156.5 527.1L161.5 527.1M161.5 527.1L166.4 527.2M166.4 527.2L171.3 527.3M171.3 527.3L176.1 527.4M176.1 527.4L180.7 527.5M180.7 527.5L185.2 527.7M185.2 527.7L189.6 527.8M189.6 527.8L193.8 528.0M193.8 528.0L197.7 528.3M197.7 528.3L201.4 528.5M201.4 528.5L204.9 528.7M110.6 516.9L114.1 516.7M114.1 516.7L117.8 516.5M117.8 516.5L121.7 516.4M121.7 516.4L125.6 516.2M125.6 516.2L129.8 516.1M129.8 516.1L134.0 516.0M134.0 516.0L138.3 515.9M138.3 515.9L142.7 515.9M142.7 515.9L147.1 515.9M147.1 515.9L151.5 515.8M151.5 515.8L155.9 515.9M155.9 515.9L160.3 515.9M160.3 515.9L164.7 515.9M164.7 515.9L169.0 516.0M169.0 516.0L173.2 516.1M173.2 516.1L177.4 516.2M177.4 516.2L181.3 516.4M181.3 516.4L185.2 516.5M185.2 516.5L188.9 516.7M188.9 516.7L192.4 516.9M133.3 506.6L136.8 506.5M136.8 506.5L140.4 506.4M140.4 506.4L144.1 506.4M144.1 506.4L147.8 506.4M147.8 506.4L151.5 506.4M151.5 506.4L155.2 506.4M155.2 506.4L158.9 506.4M158.9 506.4L162.6 506.4M162.6 506.4L166.2 506.5M166.2 506.5L169.7 506.6M101.4 621.5L98.8 616.7M98.8 616.7L96.4 611.7M96.4 611.7L94.4 606.5M94.4 606.5L92.5 601.1M92.5 601.1L91.0 595.5M91.0 595.5L89.8 589.9M89.8 589.9L88.9 584.2M88.9 584.2L88.3 578.5M88.3 578.5L88.0 572.7M88.0 572.7L88.0 566.9M88.0 566.9L88.3 561.1M88.3 561.1L88.9 555.5M88.9 555.5L89.8 549.9M89.8 549.9L91.0 544.4M91.0 544.4L92.5 539.0M92.5 539.0L94.4 533.9M117.2 634.1L114.4 630.0M114.4 630.0L111.9 625.6M111.9 625.6L109.5 621.0M109.5 621.0L107.3 616.1M107.3 616.1L105.3 611.1M105.3 611.1L103.5 605.8M103.5 605.8L102.0 600.4M102.0 600.4L100.8 594.9M100.8 594.9L99.7 589.2M99.7 589.2L99.0 583.5M99.0 583.5L98.4 577.7M98.4 577.7L98.2 572.0M98.2 572.0L98.2 566.2M98.2 566.2L98.4 560.4M98.4 560.4L99.0 554.8M99.0 554.8L99.7 549.2M99.7 549.2L100.8 543.7M100.8 543.7L102.0 538.4M102.0 538.4L103.5 533.2M103.5 533.2L105.3 528.3M105.3 528.3L107.3 523.5M107.3 523.5L109.5 519.0M127.1 637.5L124.8 633.7M124.8 633.7L122.7 629.6M122.7 629.6L120.7 625.2M120.7 625.2L118.8 620.5M118.8 620.5L117.1 615.6M117.1 615.6L115.6 610.6M115.6 610.6L114.2 605.3M114.2 605.3L113.0 599.9M113.0 599.9L112.0 594.3M112.0 594.3L111.2 588.7M111.2 588.7L110.6 582.9M110.6 582.9L110.2 577.2M110.2 577.2L110.0 571.4M110.0 571.4L110.0 565.6M110.0 565.6L110.2 559.9M110.2 559.9L110.6 554.2M110.6 554.2L111.2 548.6M111.2 548.6L112.0 543.1M112.0 543.1L113.0 537.8M113.0 537.8L114.2 532.7M114.2 532.7L115.6 527.8M115.6 527.8L117.1 523.0M117.1 523.0L118.8 518.6M118.8 518.6L120.7 514.4M120.7 514.4L122.7 510.5M136.5 640.8L134.8 637.3M134.8 637.3L133.3 633.4M133.3 633.4L131.8 629.3M131.8 629.3L130.4 624.9M130.4 624.9L129.1 620.2M129.1 620.2L128.0 615.3M128.0 615.3L126.9 610.2M126.9 610.2L126.0 604.9M126.0 604.9L125.2 599.5M125.2 599.5L124.5 593.9M124.5 593.9L124.0 588.3M124.0 588.3L123.5 582.5M123.5 582.5L123.3 576.7M123.3 576.7L123.1 571.0M123.1 571.0L123.1 565.2M123.1 565.2L123.3 559.4M123.3 559.4L123.5 553.8M123.5 553.8L124.0 548.2M124.0 548.2L124.5 542.7M124.5 542.7L125.2 537.4M125.2 537.4L126.0 532.3M126.0 532.3L126.9 527.4M126.9 527.4L128.0 522.7M128.0 522.7L129.1 518.2M129.1 518.2L130.4 514.1M130.4 514.1L131.8 510.2M131.8 510.2L133.3 506.6M144.7 643.9L143.9 640.7M143.9 640.7L143.0 637.1M143.0 637.1L142.2 633.3M142.2 633.3L141.5 629.1M141.5 629.1L140.8 624.7M140.8 624.7L140.1 620.0M140.1 620.0L139.6 615.1M139.6 615.1L139.0 610.0M139.0 610.0L138.5 604.7M138.5 604.7L138.1 599.2M138.1 599.2L137.8 593.7M137.8 593.7L137.5 588.0M137.5 588.0L137.3 582.3M137.3 582.3L137.2 576.5M137.2 576.5L137.1 570.7M137.1 570.7L137.1 564.9M137.1 564.9L137.2 559.2M137.2 559.2L137.3 553.5M137.3 553.5L137.5 547.9M137.5 547.9L137.8 542.5M137.8 542.5L138.1 537.2M138.1 537.2L138.5 532.1M138.5 532.1L139.0 527.2M139.0 527.2L139.6 522.5M139.6 522.5L140.1 518.0M140.1 518.0L140.8 513.9M140.8 513.9L141.5 510.0M141.5 510.0L142.2 506.4M151.5 643.9L151.5 640.6M151.5 640.6L151.5 637.1M151.5 637.1L151.5 633.2M151.5 633.2L151.5 629.0M151.5 629.0L151.5 624.6M151.5 624.6L151.5 619.9M151.5 619.9L151.5 615.0M151.5 615.0L151.5 609.9M151.5 609.9L151.5 604.6M151.5 604.6L151.5 599.1M151.5 599.1L151.5 593.6M151.5 593.6L151.5 587.9M151.5 587.9L151.5 582.2M151.5 582.2L151.5 576.4M151.5 576.4L151.5 570.6M151.5 570.6L151.5 564.8M151.5 564.8L151.5 559.1M151.5 559.1L151.5 553.4M151.5 553.4L151.5 547.9M151.5 547.9L151.5 542.4M151.5 542.4L151.5 537.1M151.5 537.1L151.5 532.0M151.5 532.0L151.5 527.1M151.5 527.1L151.5 522.4M151.5 522.4L151.5 518.0M151.5 518.0L151.5 513.8M151.5 513.8L151.5 509.9M151.5 509.9L151.5 506.4M151.5 506.4L151.5 503.1M158.3 643.9L159.1 640.7M159.1 640.7L160.0 637.1M160.0 637.1L160.8 633.3M160.8 633.3L161.5 629.1M161.5 629.1L162.2 624.7M162.2 624.7L162.9 620.0M162.9 620.0L163.4 615.1M163.4 615.1L164.0 610.0M164.0 610.0L164.5 604.7M164.5 604.7L164.9 599.2M164.9 599.2L165.2 593.7M165.2 593.7L165.5 588.0M165.5 588.0L165.7 582.3M165.7 582.3L165.8 576.5M165.8 576.5L165.9 570.7M165.9 570.7L165.9 564.9M165.9 564.9L165.8 559.2M165.8 559.2L165.7 553.5M165.7 553.5L165.5 547.9M165.5 547.9L165.2 542.5M165.2 542.5L164.9 537.2M164.9 537.2L164.5 532.1M164.5 532.1L164.0 527.2M164.0 527.2L163.4 522.5M163.4 522.5L162.9 518.0M162.9 518.0L162.2 513.9M162.2 513.9L161.5 510.0M161.5 510.0L160.8 506.4M166.5 640.8L168.2 637.3M168.2 637.3L169.7 633.4M169.7 633.4L171.2 629.3M171.2 629.3L172.6 624.9M172.6 624.9L173.9 620.2M173.9 620.2L175.0 615.3M175.0 615.3L176.1 610.2M176.1 610.2L177.0 604.9M177.0 604.9L177.8 599.5M177.8 599.5L178.5 593.9M178.5 593.9L179.0 588.3M179.0 588.3L179.5 582.5M179.5 582.5L179.7 576.7M179.7 576.7L179.9 571.0M179.9 571.0L179.9 565.2M179.9 565.2L179.7 559.4M179.7 559.4L179.5 553.8M179.5 553.8L179.0 548.2M179.0 548.2L178.5 542.7M178.5 542.7L177.8 537.4M177.8 537.4L177.0 532.3M177.0 532.3L176.1 527.4M176.1 527.4L175.0 522.7M175.0 522.7L173.9 518.2M173.9 518.2L172.6 514.1M172.6 514.1L171.2 510.2M171.2 510.2L169.7 506.6M175.9 637.5L178.2 633.7M178.2 633.7L180.3 629.6M180.3 629.6L182.3 625.2M182.3 625.2L184.2 620.5M184.2 620.5L185.9 615.6M185.9 615.6L187.4 610.6M187.4 610.6L188.8 605.3M188.8 605.3L190.0 599.9M190.0 599.9L191.0 594.3M191.0 594.3L191.8 588.7M191.8 588.7L192.4 582.9M192.4 582.9L192.8 577.2M192.8 577.2L193.0 571.4M193.0 571.4L193.0 565.6M193.0 565.6L192.8 559.9M192.8 559.9L192.4 554.2M192.4 554.2L191.8 548.6M191.8 548.6L191.0 543.1M191.0 543.1L190.0 537.8M190.0 537.8L188.8 532.7M188.8 532.7L187.4 527.8M187.4 527.8L185.9 523.0M185.9 523.0L184.2 518.6M184.2 518.6L182.3 514.4M182.3 514.4L180.3 510.5M185.8 634.1L188.6 630.0M188.6 630.0L191.1 625.6M191.1 625.6L193.5 621.0M193.5 621.0L195.7 616.1M195.7 616.1L197.7 611.1M197.7 611.1L199.5 605.8M199.5 605.8L201.0 600.4M201.0 600.4L202.2 594.9M202.2 594.9L203.3 589.2M203.3 589.2L204.0 583.5M204.0 583.5L204.6 577.7M204.6 577.7L204.8 572.0M204.8 572.0L204.8 566.2M204.8 566.2L204.6 560.4M204.6 560.4L204.0 554.8M204.0 554.8L203.3 549.2M203.3 549.2L202.2 543.7M202.2 543.7L201.0 538.4M201.0 538.4L199.5 533.2M199.5 533.2L197.7 528.3M197.7 528.3L195.7 523.5M195.7 523.5L193.5 519.0M201.6 621.5L204.2 616.7M204.2 616.7L206.6 611.7M206.6 611.7L208.6 606.5M208.6 606.5L210.5 601.1M210.5 601.1L212.0 595.5M212.0 595.5L213.2 589.9M213.2 589.9L214.1 584.2M214.1 584.2L214.7 578.5M214.7 578.5L215.0 572.7M215.0 572.7L215.0 566.9M215.0 566.9L214.7 561.1M214.7 561.1L214.1 555.5M214.1 555.5L213.2 549.9M213.2 549.9L212.0 544.4M212.0 544.4L210.5 539.0M210.5 539.0L208.6 533.9" stroke="#4a9090" stroke-width="0.8" fill="none" opacity="0.35"/>

<defs><linearGradient id="ssky" x1="0" y1="0" x2="0" y2="1"><stop offset="0" stop-color="#f4f6f5"/><stop offset="1" stop-color="#d8dcdb"/></linearGradient></defs>
<polygon points="108,562 122.8,562 122.8,586 108,586" fill="#8a6e5e"/><rect x="108" y="562" width="14.8" height="9" fill="url(#ssky)"/>
<polygon points="155,562.8 171,562.8 171,586.7 155,586.7" fill="#8a6e5e"/><rect x="155" y="562.8" width="16" height="9" fill="url(#ssky)"/>
<rect x="72" y="556" width="10.6" height="35" fill="#6f7048"/><rect x="72" y="556" width="10.6" height="16" fill="url(#ssky)"/>
<rect x="205" y="557" width="15" height="34" fill="#6a7244"/><rect x="205" y="557" width="15" height="15" fill="url(#ssky)"/>
<rect x="126" y="555" width="22.9" height="35.6" fill="#5a6438"/><rect x="126" y="555" width="22.9" height="17" fill="url(#ssky)"/>
<polygon points="137,559 139,559 140,566 136,566" fill="#5a9080"/><rect x="134.5" y="565" width="6" height="7" fill="#6d6254"/>
<polygon points="132,496 155.6,495 151,509 130,509" fill="#f0f3f2"/>
<polygon points="150.4,510 167,511 168,527 152.5,527" fill="#f2f4f3"/>
<polygon points="92.9,515 113,502.6 117,506 96,519" fill="#f0f3f2"/>
<polygon points="189.5,499.5 194,498 214,515 210,518" fill="#f0f3f2"/>
<polygon points="150.4,632 165.9,632 165.9,644.4 150.4,644.4" fill="#8a6e5e"/>
<polygon points="135,646.5 156.6,646.5 156.6,656.8 135,656.8" fill="#7a6a50"/>
<polygon points="101,636 110,634 128,646 122,649" fill="#8a7a66"/>

<path d="M151.5 656.0L150.5 656.0M150.5 656.0L149.5 656.0M149.5 656.0L148.5 656.0M148.5 656.0L147.5 656.0M147.5 656.0L146.6 656.0M146.6 656.0L145.6 656.0M145.6 656.0L144.7 655.9M144.7 655.9L143.9 655.9M143.9 655.9L143.0 655.9M143.0 655.9L142.2 655.8M142.2 655.8L141.5 655.8M141.5 655.8L140.8 655.7M140.8 655.7L140.1 655.7M140.1 655.7L139.6 655.6M139.6 655.6L139.0 655.5M139.0 655.5L138.5 655.5M138.5 655.5L138.1 655.4M164.9 655.4L164.5 655.5M164.5 655.5L164.0 655.5M164.0 655.5L163.4 655.6M163.4 655.6L162.9 655.7M162.9 655.7L162.2 655.7M162.2 655.7L161.5 655.8M161.5 655.8L160.8 655.8M160.8 655.8L160.0 655.9M160.0 655.9L159.1 655.9M159.1 655.9L158.3 655.9M158.3 655.9L157.4 656.0M157.4 656.0L156.4 656.0M156.4 656.0L155.5 656.0M155.5 656.0L154.5 656.0M154.5 656.0L153.5 656.0M153.5 656.0L152.5 656.0M152.5 656.0L151.5 656.0M140.0 653.1L138.2 653.1M138.2 653.1L136.5 653.0M136.5 653.0L134.8 652.9M134.8 652.9L133.3 652.8M133.3 652.8L131.8 652.7M131.8 652.7L130.4 652.6M130.4 652.6L129.1 652.5M129.1 652.5L128.0 652.4M128.0 652.4L126.9 652.3M126.9 652.3L126.0 652.2M126.0 652.2L125.2 652.0M125.2 652.0L124.5 651.9M124.5 651.9L124.0 651.8M124.0 651.8L123.5 651.6M179.5 651.6L179.0 651.8M179.0 651.8L178.5 651.9M178.5 651.9L177.8 652.0M177.8 652.0L177.0 652.2M177.0 652.2L176.1 652.3M176.1 652.3L175.0 652.4M175.0 652.4L173.9 652.5M173.9 652.5L172.6 652.6M172.6 652.6L171.2 652.7M171.2 652.7L169.7 652.8M169.7 652.8L168.2 652.9M168.2 652.9L166.5 653.0M166.5 653.0L164.8 653.1M164.8 653.1L163.0 653.1M118.8 647.0L117.1 646.8M117.1 646.8L115.6 646.7M115.6 646.7L114.2 646.5M114.2 646.5L113.0 646.3M113.0 646.3L112.0 646.1M112.0 646.1L111.2 645.9M111.2 645.9L110.6 645.7M110.6 645.7L110.2 645.5M192.8 645.5L192.4 645.7M192.4 645.7L191.8 645.9M191.8 645.9L191.0 646.1M191.0 646.1L190.0 646.3M190.0 646.3L188.8 646.5M188.8 646.5L187.4 646.7M187.4 646.7L185.9 646.8M185.9 646.8L184.2 647.0M105.3 638.8L103.5 638.6M103.5 638.6L102.0 638.3M102.0 638.3L100.8 638.1M100.8 638.1L99.7 637.8M99.7 637.8L99.0 637.6M99.0 637.6L98.4 637.3M204.6 637.3L204.0 637.6M204.0 637.6L203.3 637.8M203.3 637.8L202.2 638.1M202.2 638.1L201.0 638.3M201.0 638.3L199.5 638.6M199.5 638.6L197.7 638.8M92.5 628.4L91.0 628.1M91.0 628.1L89.8 627.8M89.8 627.8L88.9 627.5M88.9 627.5L88.3 627.2M88.3 627.2L88.0 626.9M215.0 626.9L214.7 627.2M214.7 627.2L214.1 627.5M214.1 627.5L213.2 627.8M213.2 627.8L212.0 628.1M212.0 628.1L210.5 628.4M83.1 616.4L81.8 616.1M81.8 616.1L80.7 615.8M80.7 615.8L80.0 615.4M80.0 615.4L79.7 615.1M223.3 615.1L223.0 615.4M223.0 615.4L222.3 615.8M222.3 615.8L221.2 616.1M221.2 616.1L219.9 616.4M77.3 603.5L75.8 603.1M75.8 603.1L74.7 602.8M74.7 602.8L73.9 602.4M73.9 602.4L73.6 602.0M229.4 602.0L229.1 602.4M229.1 602.4L228.3 602.8M228.3 602.8L227.2 603.1M227.2 603.1L225.7 603.5M72.2 589.3L71.0 588.9M71.0 588.9L70.2 588.5M70.2 588.5L69.8 588.1M233.2 588.1L232.8 588.5M232.8 588.5L232.0 588.9M232.0 588.9L230.8 589.3M71.0 574.9L69.8 574.5M69.8 574.5L69.0 574.1M69.0 574.1L68.6 573.7M68.6 573.7L68.6 573.3M234.4 573.3L234.4 573.7M234.4 573.7L234.0 574.1M234.0 574.1L233.2 574.5M233.2 574.5L232.0 574.9M72.2 560.5L71.0 560.1M71.0 560.1L70.2 559.7M70.2 559.7L69.8 559.3M69.8 559.3L69.8 558.9M233.2 558.9L233.2 559.3M233.2 559.3L232.8 559.7M232.8 559.7L232.0 560.1M232.0 560.1L230.8 560.5M75.8 546.5L74.7 546.1M74.7 546.1L73.9 545.8M73.9 545.8L73.6 545.4M73.6 545.4L73.6 545.0M229.4 545.0L229.4 545.4M229.4 545.4L229.1 545.8M229.1 545.8L228.3 546.1M228.3 546.1L227.2 546.5M81.8 533.3L80.7 533.0M80.7 533.0L80.0 532.6M80.0 532.6L79.7 532.3M79.7 532.3L79.7 531.9M223.3 531.9L223.3 532.3M223.3 532.3L223.0 532.6M223.0 532.6L222.3 533.0M222.3 533.0L221.2 533.3M89.8 521.4L88.9 521.0M88.9 521.0L88.3 520.7M88.3 520.7L88.0 520.4M88.0 520.4L88.0 520.1M215.0 520.1L215.0 520.4M215.0 520.4L214.7 520.7M214.7 520.7L214.1 521.0M214.1 521.0L213.2 521.4M100.8 511.2L99.7 511.0M99.7 511.0L99.0 510.7M99.0 510.7L98.4 510.5M98.4 510.5L98.2 510.2M98.2 510.2L98.2 509.9M98.2 509.9L98.4 509.7M204.6 509.7L204.8 509.9M204.8 509.9L204.8 510.2M204.8 510.2L204.6 510.5M204.6 510.5L204.0 510.7M204.0 510.7L203.3 511.0M203.3 511.0L202.2 511.2M113.0 502.9L112.0 502.7M112.0 502.7L111.2 502.5M111.2 502.5L110.6 502.3M110.6 502.3L110.2 502.1M110.2 502.1L110.0 501.9M110.0 501.9L110.0 501.7M110.0 501.7L110.2 501.5M192.8 501.5L193.0 501.7M193.0 501.7L193.0 501.9M193.0 501.9L192.8 502.1M192.8 502.1L192.4 502.3M192.4 502.3L191.8 502.5M191.8 502.5L191.0 502.7M191.0 502.7L190.0 502.9M128.0 496.8L126.9 496.7M126.9 496.7L126.0 496.6M126.0 496.6L125.2 496.4M125.2 496.4L124.5 496.3M124.5 496.3L124.0 496.2M124.0 496.2L123.5 496.0M123.5 496.0L123.3 495.9M123.3 495.9L123.1 495.8M123.1 495.8L123.1 495.6M123.1 495.6L123.3 495.5M123.3 495.5L123.5 495.4M179.5 495.4L179.7 495.5M179.7 495.5L179.9 495.6M179.9 495.6L179.9 495.8M179.9 495.8L179.7 495.9M179.7 495.9L179.5 496.0M179.5 496.0L179.0 496.2M179.0 496.2L178.5 496.3M178.5 496.3L177.8 496.4M177.8 496.4L177.0 496.6M177.0 496.6L176.1 496.7M176.1 496.7L175.0 496.8M151.5 493.0L150.5 493.0M150.5 493.0L149.5 493.0M149.5 493.0L148.5 492.9M148.5 492.9L147.5 492.9M147.5 492.9L146.6 492.9M146.6 492.9L145.6 492.9M145.6 492.9L144.7 492.8M144.7 492.8L143.9 492.8M143.9 492.8L143.0 492.8M143.0 492.8L142.2 492.7M142.2 492.7L141.5 492.7M141.5 492.7L140.8 492.6M140.8 492.6L140.1 492.6M140.1 492.6L139.6 492.5M139.6 492.5L139.0 492.5M139.0 492.5L138.5 492.4M138.5 492.4L138.1 492.3M138.1 492.3L137.8 492.3M137.8 492.3L137.5 492.2M137.5 492.2L137.3 492.1M137.3 492.1L137.2 492.1M137.2 492.1L137.1 492.0M137.1 492.0L137.1 491.9M137.1 491.9L137.2 491.9M137.2 491.9L137.3 491.8M137.3 491.8L137.5 491.7M137.5 491.7L137.8 491.6M137.8 491.6L138.1 491.6M164.9 491.6L165.2 491.6M165.2 491.6L165.5 491.7M165.5 491.7L165.7 491.8M165.7 491.8L165.8 491.9M165.8 491.9L165.9 491.9M165.9 491.9L165.9 492.0M165.9 492.0L165.8 492.1M165.8 492.1L165.7 492.1M165.7 492.1L165.5 492.2M165.5 492.2L165.2 492.3M165.2 492.3L164.9 492.3M164.9 492.3L164.5 492.4M164.5 492.4L164.0 492.5M164.0 492.5L163.4 492.5M163.4 492.5L162.9 492.6M162.9 492.6L162.2 492.6M162.2 492.6L161.5 492.7M161.5 492.7L160.8 492.7M160.8 492.7L160.0 492.8M160.0 492.8L159.1 492.8M159.1 492.8L158.3 492.8M158.3 492.8L157.4 492.9M157.4 492.9L156.4 492.9M156.4 492.9L155.5 492.9M155.5 492.9L154.5 492.9M154.5 492.9L153.5 493.0M153.5 493.0L152.5 493.0M152.5 493.0L151.5 493.0M151.5 656.5L151.5 656.3M151.5 656.3L151.5 655.7M151.5 655.7L151.5 654.7M151.5 654.7L151.5 653.3M151.5 493.7L151.5 492.3M151.5 492.3L151.5 491.3M151.5 491.3L151.5 490.7M150.5 656.5L149.5 656.3M149.5 656.3L148.5 655.7M148.5 655.7L147.5 654.7M147.5 654.7L146.6 653.3M148.5 493.7L149.5 492.3M149.5 492.3L150.5 491.3M150.5 491.3L151.5 490.7M149.5 656.5L147.5 656.2M147.5 656.2L145.6 655.6M145.6 655.6L143.7 654.6M143.7 654.6L141.8 653.2M145.6 493.6L147.5 492.3M147.5 492.3L149.5 491.3M149.5 491.3L151.5 490.7M148.6 656.4L145.7 656.2M145.7 656.2L142.9 655.5M142.9 655.5L140.1 654.5M140.1 654.5L137.3 653.0M142.9 493.6L145.7 492.2M145.7 492.2L148.6 491.3M148.6 491.3L151.5 490.7M147.8 656.4L144.1 656.1M144.1 656.1L140.4 655.4M140.4 655.4L136.8 654.3M136.8 654.3L133.3 652.8M133.3 652.8L129.8 650.9M140.4 493.4L144.1 492.1M144.1 492.1L147.8 491.2M147.8 491.2L151.5 490.7M142.7 656.0L138.3 655.3M138.3 655.3L134.0 654.1M134.0 654.1L129.8 652.6M129.8 652.6L125.6 650.7M125.6 650.7L121.7 648.4M134.0 494.9L138.3 493.3M138.3 493.3L142.7 492.0M142.7 492.0L147.1 491.2M147.1 491.2L151.5 490.7M141.5 655.9L136.6 655.1M136.6 655.1L131.7 653.9M131.7 653.9L126.9 652.3M126.9 652.3L122.3 650.3M122.3 650.3L117.8 648.0M117.8 648.0L113.4 645.3M113.4 645.3L109.2 642.2M126.9 496.7L131.7 494.7M131.7 494.7L136.6 493.1M136.6 493.1L141.5 491.9M141.5 491.9L146.5 491.1M146.5 491.1L151.5 490.7M135.3 654.9L130.0 653.6M130.0 653.6L124.8 652.0M124.8 652.0L119.8 649.9M119.8 649.9L114.9 647.5M114.9 647.5L110.2 644.8M110.2 644.8L105.7 641.6M105.7 641.6L101.4 638.2M101.4 638.2L97.3 634.4M97.3 634.4L93.5 630.4M93.5 630.4L90.0 626.0M90.0 626.0L86.8 621.4M105.7 507.7L110.2 504.3M110.2 504.3L114.9 501.3M114.9 501.3L119.8 498.7M119.8 498.7L124.8 496.4M124.8 496.4L130.0 494.5M130.0 494.5L135.3 492.9M135.3 492.9L140.6 491.8M140.6 491.8L146.1 491.0M146.1 491.0L151.5 490.7M123.5 651.6L118.3 649.5M118.3 649.5L113.1 647.1M113.1 647.1L108.2 644.2M108.2 644.2L103.5 641.1M103.5 641.1L99.0 637.6M99.0 637.6L94.7 633.8M94.7 633.8L90.8 629.6M90.8 629.6L87.1 625.3M87.1 625.3L83.7 620.6M83.7 620.6L80.7 615.8M80.7 615.8L78.0 610.7M78.0 610.7L75.7 605.4M75.7 605.4L73.8 600.0M73.8 600.0L72.2 594.5M72.2 594.5L71.0 588.9M71.0 588.9L70.2 583.2M70.2 583.2L69.8 577.4M69.8 577.4L69.8 571.6M69.8 571.6L70.2 565.8M70.2 565.8L71.0 560.1M71.0 560.1L72.2 554.4M72.2 554.4L73.8 548.9M73.8 548.9L75.7 543.4M75.7 543.4L78.0 538.1M78.0 538.1L80.7 533.0M80.7 533.0L83.7 528.0M83.7 528.0L87.1 523.3M87.1 523.3L90.8 518.8M90.8 518.8L94.7 514.6M94.7 514.6L99.0 510.7M99.0 510.7L103.5 507.1M103.5 507.1L108.2 503.8M108.2 503.8L113.1 500.9M113.1 500.9L118.3 498.3M118.3 498.3L123.5 496.0M123.5 496.0L129.0 494.2M129.0 494.2L134.5 492.7M134.5 492.7L140.1 491.6M140.1 491.6L145.8 491.0M145.8 491.0L151.5 490.7M68.6 576.4L68.6 570.6M68.6 570.6L69.0 564.8M69.0 564.8L69.8 559.1M69.8 559.1L71.0 553.5M71.0 553.5L72.6 547.9M72.6 547.9L74.5 542.5M74.5 542.5L76.9 537.2M76.9 537.2L79.6 532.1M79.6 532.1L82.7 527.2M82.7 527.2L86.1 522.5M86.1 522.5L89.8 518.1M89.8 518.1L93.8 513.9M93.8 513.9L98.1 510.1M98.1 510.1L102.7 506.5M102.7 506.5L107.5 503.3M107.5 503.3L112.5 500.4M112.5 500.4L117.7 497.9M117.7 497.9L123.1 495.7M123.1 495.7L128.6 493.9M128.6 493.9L134.2 492.5M134.2 492.5L139.9 491.5M139.9 491.5L145.7 490.9M145.7 490.9L151.5 490.7M123.5 495.4L129.0 493.6M129.0 493.6L134.5 492.3M134.5 492.3L140.1 491.4M140.1 491.4L145.8 490.8M145.8 490.8L151.5 490.7M135.3 492.1L140.6 491.2M140.6 491.2L146.1 490.8M146.1 490.8L151.5 490.7M141.5 491.1L146.5 490.7M146.5 490.7L151.5 490.7M142.7 491.0L147.1 490.6M147.1 490.6L151.5 490.7M147.8 490.6L151.5 490.7M148.6 490.6L151.5 490.7M149.5 490.5L151.5 490.7M150.5 490.5L151.5 490.7M151.5 490.5L151.5 490.7M152.5 490.5L151.5 490.7M153.5 490.5L151.5 490.7M154.4 490.6L151.5 490.7M155.2 490.6L151.5 490.7M160.3 491.0L155.9 490.6M155.9 490.6L151.5 490.7M161.5 491.1L156.5 490.7M156.5 490.7L151.5 490.7M167.7 492.1L162.4 491.2M162.4 491.2L156.9 490.8M156.9 490.8L151.5 490.7M179.5 495.4L174.0 493.6M174.0 493.6L168.5 492.3M168.5 492.3L162.9 491.4M162.9 491.4L157.2 490.8M157.2 490.8L151.5 490.7M234.4 570.6L234.0 564.8M234.0 564.8L233.2 559.1M233.2 559.1L232.0 553.5M232.0 553.5L230.4 547.9M230.4 547.9L228.5 542.5M228.5 542.5L226.1 537.2M226.1 537.2L223.4 532.1M223.4 532.1L220.3 527.2M220.3 527.2L216.9 522.5M216.9 522.5L213.2 518.1M213.2 518.1L209.2 513.9M209.2 513.9L204.9 510.1M204.9 510.1L200.3 506.5M200.3 506.5L195.5 503.3M195.5 503.3L190.5 500.4M190.5 500.4L185.3 497.9M185.3 497.9L179.9 495.7M179.9 495.7L174.4 493.9M174.4 493.9L168.8 492.5M168.8 492.5L163.1 491.5M163.1 491.5L157.3 490.9M157.3 490.9L151.5 490.7M179.5 651.6L184.7 649.5M184.7 649.5L189.9 647.1M189.9 647.1L194.8 644.2M194.8 644.2L199.5 641.1M199.5 641.1L204.0 637.6M204.0 637.6L208.3 633.8M208.3 633.8L212.2 629.6M212.2 629.6L215.9 625.3M215.9 625.3L219.3 620.6M219.3 620.6L222.3 615.8M222.3 615.8L225.0 610.7M225.0 610.7L227.3 605.4M227.3 605.4L229.2 600.0M229.2 600.0L230.8 594.5M230.8 594.5L232.0 588.9M232.0 588.9L232.8 583.2M232.8 583.2L233.2 577.4M233.2 577.4L233.2 571.6M233.2 571.6L232.8 565.8M232.8 565.8L232.0 560.1M232.0 560.1L230.8 554.4M230.8 554.4L229.2 548.9M229.2 548.9L227.3 543.4M227.3 543.4L225.0 538.1M225.0 538.1L222.3 533.0M222.3 533.0L219.3 528.0M219.3 528.0L215.9 523.3M215.9 523.3L212.2 518.8M212.2 518.8L208.3 514.6M208.3 514.6L204.0 510.7M204.0 510.7L199.5 507.1M199.5 507.1L194.8 503.8M194.8 503.8L189.9 500.9M189.9 500.9L184.7 498.3M184.7 498.3L179.5 496.0M179.5 496.0L174.0 494.2M174.0 494.2L168.5 492.7M168.5 492.7L162.9 491.6M162.9 491.6L157.2 491.0M157.2 491.0L151.5 490.7M167.7 654.9L173.0 653.6M173.0 653.6L178.2 652.0M178.2 652.0L183.2 649.9M183.2 649.9L188.1 647.5M188.1 647.5L192.8 644.8M192.8 644.8L197.3 641.6M197.3 641.6L201.6 638.2M201.6 638.2L205.7 634.4M205.7 634.4L209.5 630.4M209.5 630.4L213.0 626.0M213.0 626.0L216.2 621.4M197.3 507.7L192.8 504.3M192.8 504.3L188.1 501.3M188.1 501.3L183.2 498.7M183.2 498.7L178.2 496.4M178.2 496.4L173.0 494.5M173.0 494.5L167.7 492.9M167.7 492.9L162.4 491.8M162.4 491.8L156.9 491.0M156.9 491.0L151.5 490.7M161.5 655.9L166.4 655.1M166.4 655.1L171.3 653.9M171.3 653.9L176.1 652.3M176.1 652.3L180.7 650.3M180.7 650.3L185.2 648.0M185.2 648.0L189.6 645.3M189.6 645.3L193.8 642.2M176.1 496.7L171.3 494.7M171.3 494.7L166.4 493.1M166.4 493.1L161.5 491.9M161.5 491.9L156.5 491.1M156.5 491.1L151.5 490.7M160.3 656.0L164.7 655.3M164.7 655.3L169.0 654.1M169.0 654.1L173.2 652.6M173.2 652.6L177.4 650.7M177.4 650.7L181.3 648.4M169.0 494.9L164.7 493.3M164.7 493.3L160.3 492.0M160.3 492.0L155.9 491.2M155.9 491.2L151.5 490.7M155.2 656.4L158.9 656.1M158.9 656.1L162.6 655.4M162.6 655.4L166.2 654.3M166.2 654.3L169.7 652.8M169.7 652.8L173.2 650.9M162.6 493.4L158.9 492.1M158.9 492.1L155.2 491.2M155.2 491.2L151.5 490.7M154.4 656.4L157.3 656.2M157.3 656.2L160.1 655.5M160.1 655.5L162.9 654.5M162.9 654.5L165.7 653.0M160.1 493.6L157.3 492.2M157.3 492.2L154.4 491.3M154.4 491.3L151.5 490.7M153.5 656.5L155.5 656.2M155.5 656.2L157.4 655.6M157.4 655.6L159.3 654.6M159.3 654.6L161.2 653.2M157.4 493.6L155.5 492.3M155.5 492.3L153.5 491.3M153.5 491.3L151.5 490.7M152.5 656.5L153.5 656.3M153.5 656.3L154.5 655.7M154.5 655.7L155.5 654.7M155.5 654.7L156.4 653.3M154.5 493.7L153.5 492.3M153.5 492.3L152.5 491.3M152.5 491.3L151.5 490.7" stroke="#5aa8a8" stroke-width="0.8" fill="none" opacity="0.12"/><path d="M151.5 653.3L149.5 653.3M149.5 653.3L147.5 653.3M147.5 653.3L145.6 653.2M145.6 653.2L143.7 653.2M143.7 653.2L141.8 653.2M141.8 653.2L140.0 653.1M163.0 653.1L161.2 653.2M161.2 653.2L159.3 653.2M159.3 653.2L157.4 653.2M157.4 653.2L155.5 653.3M155.5 653.3L153.5 653.3M153.5 653.3L151.5 653.3M151.5 648.1L148.6 648.1M148.6 648.1L145.7 648.1M145.7 648.1L142.9 648.0M142.9 648.0L140.1 648.0M140.1 648.0L137.3 647.9M137.3 647.9L134.6 647.8M134.6 647.8L132.0 647.8M132.0 647.8L129.5 647.7M129.5 647.7L127.1 647.5M127.1 647.5L124.8 647.4M124.8 647.4L122.7 647.3M122.7 647.3L120.7 647.1M120.7 647.1L118.8 647.0M184.2 647.0L182.3 647.1M182.3 647.1L180.3 647.3M180.3 647.3L178.2 647.4M178.2 647.4L175.9 647.5M175.9 647.5L173.5 647.7M173.5 647.7L171.0 647.8M171.0 647.8L168.4 647.8M168.4 647.8L165.7 647.9M165.7 647.9L162.9 648.0M162.9 648.0L160.1 648.0M160.1 648.0L157.3 648.1M157.3 648.1L154.4 648.1M154.4 648.1L151.5 648.1M133.3 640.4L129.8 640.3M129.8 640.3L126.5 640.2M126.5 640.2L123.2 640.1M123.2 640.1L120.1 639.9M120.1 639.9L117.2 639.8M117.2 639.8L114.4 639.6M114.4 639.6L111.9 639.4M111.9 639.4L109.5 639.2M109.5 639.2L107.3 639.0M107.3 639.0L105.3 638.8M197.7 638.8L195.7 639.0M195.7 639.0L193.5 639.2M193.5 639.2L191.1 639.4M191.1 639.4L188.6 639.6M188.6 639.6L185.8 639.8M185.8 639.8L182.9 639.9M182.9 639.9L179.8 640.1M179.8 640.1L176.5 640.2M176.5 640.2L173.2 640.3M173.2 640.3L169.7 640.4M110.6 630.1L107.3 629.9M107.3 629.9L104.2 629.7M104.2 629.7L101.4 629.5M101.4 629.5L98.8 629.2M98.8 629.2L96.4 628.9M96.4 628.9L94.4 628.7M94.4 628.7L92.5 628.4M210.5 628.4L208.6 628.7M208.6 628.7L206.6 628.9M206.6 628.9L204.2 629.2M204.2 629.2L201.6 629.5M201.6 629.5L198.8 629.7M198.8 629.7L195.7 629.9M195.7 629.9L192.4 630.1M98.1 618.3L94.9 618.0M94.9 618.0L91.9 617.7M91.9 617.7L89.2 617.4M89.2 617.4L86.9 617.1M86.9 617.1L84.9 616.8M84.9 616.8L83.1 616.4M219.9 616.4L218.1 616.8M218.1 616.8L216.1 617.1M216.1 617.1L213.8 617.4M213.8 617.4L211.1 617.7M211.1 617.7L208.1 618.0M208.1 618.0L204.9 618.3M90.0 605.2L86.8 604.9M86.8 604.9L84.0 604.5M84.0 604.5L81.4 604.2M81.4 604.2L79.2 603.9M79.2 603.9L77.3 603.5M225.7 603.5L223.8 603.9M223.8 603.9L221.6 604.2M221.6 604.2L219.0 604.5M219.0 604.5L216.2 604.9M216.2 604.9L213.0 605.2M83.7 591.1L80.7 590.7M80.7 590.7L78.0 590.4M78.0 590.4L75.7 590.0M75.7 590.0L73.8 589.6M73.8 589.6L72.2 589.3M230.8 589.3L229.2 589.6M229.2 589.6L227.3 590.0M227.3 590.0L225.0 590.4M225.0 590.4L222.3 590.7M222.3 590.7L219.3 591.1M82.7 576.7L79.6 576.4M79.6 576.4L76.9 576.0M76.9 576.0L74.5 575.7M74.5 575.7L72.6 575.3M72.6 575.3L71.0 574.9M232.0 574.9L230.4 575.3M230.4 575.3L228.5 575.7M228.5 575.7L226.1 576.0M226.1 576.0L223.4 576.4M223.4 576.4L220.3 576.7M83.7 562.3L80.7 562.0M80.7 562.0L78.0 561.6M78.0 561.6L75.7 561.3M75.7 561.3L73.8 560.9M73.8 560.9L72.2 560.5M230.8 560.5L229.2 560.9M229.2 560.9L227.3 561.3M227.3 561.3L225.0 561.6M225.0 561.6L222.3 562.0M222.3 562.0L219.3 562.3M86.8 548.2L84.0 547.9M84.0 547.9L81.4 547.6M81.4 547.6L79.2 547.2M79.2 547.2L77.3 546.9M77.3 546.9L75.8 546.5M227.2 546.5L225.7 546.9M225.7 546.9L223.8 547.2M223.8 547.2L221.6 547.6M221.6 547.6L219.0 547.9M219.0 547.9L216.2 548.2M94.9 535.2L91.9 534.9M91.9 534.9L89.2 534.6M89.2 534.6L86.9 534.3M86.9 534.3L84.9 534.0M84.9 534.0L83.1 533.7M83.1 533.7L81.8 533.3M221.2 533.3L219.9 533.7M219.9 533.7L218.1 534.0M218.1 534.0L216.1 534.3M216.1 534.3L213.8 534.6M213.8 534.6L211.1 534.9M211.1 534.9L208.1 535.2M104.2 523.2L101.4 523.0M101.4 523.0L98.8 522.8M98.8 522.8L96.4 522.5M96.4 522.5L94.4 522.2M94.4 522.2L92.5 521.9M92.5 521.9L91.0 521.6M91.0 521.6L89.8 521.4M213.2 521.4L212.0 521.6M212.0 521.6L210.5 521.9M210.5 521.9L208.6 522.2M208.6 522.2L206.6 522.5M206.6 522.5L204.2 522.8M204.2 522.8L201.6 523.0M201.6 523.0L198.8 523.2M117.2 512.9L114.4 512.8M114.4 512.8L111.9 512.6M111.9 512.6L109.5 512.4M109.5 512.4L107.3 512.2M107.3 512.2L105.3 511.9M105.3 511.9L103.5 511.7M103.5 511.7L102.0 511.5M102.0 511.5L100.8 511.2M202.2 511.2L201.0 511.5M201.0 511.5L199.5 511.7M199.5 511.7L197.7 511.9M197.7 511.9L195.7 512.2M195.7 512.2L193.5 512.4M193.5 512.4L191.1 512.6M191.1 512.6L188.6 512.8M188.6 512.8L185.8 512.9M142.9 504.6L140.1 504.6M140.1 504.6L137.3 504.5M137.3 504.5L134.6 504.4M134.6 504.4L132.0 504.4M132.0 504.4L129.5 504.2M129.5 504.2L127.1 504.1M127.1 504.1L124.8 504.0M124.8 504.0L122.7 503.9M122.7 503.9L120.7 503.7M120.7 503.7L118.8 503.6M118.8 503.6L117.1 503.4M117.1 503.4L115.6 503.2M115.6 503.2L114.2 503.1M114.2 503.1L113.0 502.9M190.0 502.9L188.8 503.1M188.8 503.1L187.4 503.2M187.4 503.2L185.9 503.4M185.9 503.4L184.2 503.6M184.2 503.6L182.3 503.7M182.3 503.7L180.3 503.9M180.3 503.9L178.2 504.0M178.2 504.0L175.9 504.1M175.9 504.1L173.5 504.2M173.5 504.2L171.0 504.4M171.0 504.4L168.4 504.4M168.4 504.4L165.7 504.5M165.7 504.5L162.9 504.6M162.9 504.6L160.1 504.6M151.5 497.7L149.5 497.7M149.5 497.7L147.5 497.7M147.5 497.7L145.6 497.6M145.6 497.6L143.7 497.6M143.7 497.6L141.8 497.6M141.8 497.6L140.0 497.5M140.0 497.5L138.2 497.4M138.2 497.4L136.5 497.4M136.5 497.4L134.8 497.3M134.8 497.3L133.3 497.2M133.3 497.2L131.8 497.1M131.8 497.1L130.4 497.0M130.4 497.0L129.1 496.9M129.1 496.9L128.0 496.8M175.0 496.8L173.9 496.9M173.9 496.9L172.6 497.0M172.6 497.0L171.2 497.1M171.2 497.1L169.7 497.2M169.7 497.2L168.2 497.3M168.2 497.3L166.5 497.4M166.5 497.4L164.8 497.4M164.8 497.4L163.0 497.5M163.0 497.5L161.2 497.6M161.2 497.6L159.3 497.6M159.3 497.6L157.4 497.6M157.4 497.6L155.5 497.7M155.5 497.7L153.5 497.7M153.5 497.7L151.5 497.7M151.5 653.3L151.5 651.5M151.5 651.5L151.5 649.3M151.5 649.3L151.5 646.8M151.5 646.8L151.5 643.9M151.5 503.1L151.5 500.2M151.5 500.2L151.5 497.7M151.5 497.7L151.5 495.5M151.5 495.5L151.5 493.7M146.6 653.3L145.6 651.5M145.6 651.5L144.7 649.3M144.7 649.3L143.9 646.7M143.9 646.7L143.0 643.8M143.0 643.8L142.2 640.6M144.7 503.1L145.6 500.2M145.6 500.2L146.6 497.6M146.6 497.6L147.5 495.5M147.5 495.5L148.5 493.7M141.8 653.2L140.0 651.4M140.0 651.4L138.2 649.2M138.2 649.2L136.5 646.6M136.5 646.6L134.8 643.7M134.8 643.7L133.3 640.4M136.5 506.2L138.2 502.9M138.2 502.9L140.0 500.1M140.0 500.1L141.8 497.6M141.8 497.6L143.7 495.4M143.7 495.4L145.6 493.6M137.3 653.0L134.6 651.2M134.6 651.2L132.0 649.0M132.0 649.0L129.5 646.4M129.5 646.4L127.1 643.4M127.1 643.4L124.8 640.1M124.8 640.1L122.7 636.5M127.1 509.5L129.5 505.9M129.5 505.9L132.0 502.7M132.0 502.7L134.6 499.9M134.6 499.9L137.3 497.4M137.3 497.4L140.1 495.3M140.1 495.3L142.9 493.6M129.8 650.9L126.5 648.7M126.5 648.7L123.2 646.1M123.2 646.1L120.1 643.1M120.1 643.1L117.2 639.8M117.2 639.8L114.4 636.1M114.4 636.1L111.9 632.2M111.9 632.2L109.5 628.0M117.2 512.9L120.1 509.1M120.1 509.1L123.2 505.6M123.2 505.6L126.5 502.5M126.5 502.5L129.8 499.7M129.8 499.7L133.3 497.2M133.3 497.2L136.8 495.1M136.8 495.1L140.4 493.4M121.7 648.4L117.8 645.7M117.8 645.7L114.1 642.7M114.1 642.7L110.6 639.3M110.6 639.3L107.3 635.6M107.3 635.6L104.2 631.7M104.2 631.7L101.4 627.4M101.4 627.4L98.8 622.9M98.8 622.9L96.4 618.1M96.4 618.1L94.4 613.1M101.4 525.5L104.2 520.9M104.2 520.9L107.3 516.5M107.3 516.5L110.6 512.5M110.6 512.5L114.1 508.7M114.1 508.7L117.8 505.3M117.8 505.3L121.7 502.1M121.7 502.1L125.6 499.4M125.6 499.4L129.8 497.0M129.8 497.0L134.0 494.9M109.2 642.2L105.3 638.8M105.3 638.8L101.6 635.1M101.6 635.1L98.1 631.1M98.1 631.1L94.9 626.8M94.9 626.8L91.9 622.2M91.9 622.2L89.2 617.4M89.2 617.4L86.9 612.4M86.9 612.4L84.9 607.2M84.9 607.2L83.1 601.8M83.1 601.8L81.8 596.3M81.8 596.3L80.7 590.7M80.7 590.7L80.0 585.0M80.0 585.0L79.7 579.3M79.7 579.3L79.7 573.5M79.7 573.5L80.0 567.7M80.0 567.7L80.7 562.0M80.7 562.0L81.8 556.3M81.8 556.3L83.1 550.7M83.1 550.7L84.9 545.2M84.9 545.2L86.9 539.8M86.9 539.8L89.2 534.6M89.2 534.6L91.9 529.6M91.9 529.6L94.9 524.8M94.9 524.8L98.1 520.2M98.1 520.2L101.6 516.0M101.6 516.0L105.3 511.9M105.3 511.9L109.2 508.2M109.2 508.2L113.4 504.8M113.4 504.8L117.8 501.8M117.8 501.8L122.3 499.0M122.3 499.0L126.9 496.7M86.8 621.4L84.0 616.6M84.0 616.6L81.4 611.6M81.4 611.6L79.2 606.4M79.2 606.4L77.3 601.0M77.3 601.0L75.8 595.5M75.8 595.5L74.7 589.8M74.7 589.8L73.9 584.1M73.9 584.1L73.6 578.4M73.6 578.4L73.6 572.6M73.6 572.6L73.9 566.8M73.9 566.8L74.7 561.1M74.7 561.1L75.8 555.4M75.8 555.4L77.3 549.8M77.3 549.8L79.2 544.3M79.2 544.3L81.4 539.0M81.4 539.0L84.0 533.8M84.0 533.8L86.8 528.8M86.8 528.8L90.0 524.1M90.0 524.1L93.5 519.6M93.5 519.6L97.3 515.3M97.3 515.3L101.4 511.3M101.4 511.3L105.7 507.7M216.2 621.4L219.0 616.6M219.0 616.6L221.6 611.6M221.6 611.6L223.8 606.4M223.8 606.4L225.7 601.0M225.7 601.0L227.2 595.5M227.2 595.5L228.3 589.8M228.3 589.8L229.1 584.1M229.1 584.1L229.4 578.4M229.4 578.4L229.4 572.6M229.4 572.6L229.1 566.8M229.1 566.8L228.3 561.1M228.3 561.1L227.2 555.4M227.2 555.4L225.7 549.8M225.7 549.8L223.8 544.3M223.8 544.3L221.6 539.0M221.6 539.0L219.0 533.8M219.0 533.8L216.2 528.8M216.2 528.8L213.0 524.1M213.0 524.1L209.5 519.6M209.5 519.6L205.7 515.3M205.7 515.3L201.6 511.3M201.6 511.3L197.3 507.7M193.8 642.2L197.7 638.8M197.7 638.8L201.4 635.1M201.4 635.1L204.9 631.1M204.9 631.1L208.1 626.8M208.1 626.8L211.1 622.2M211.1 622.2L213.8 617.4M213.8 617.4L216.1 612.4M216.1 612.4L218.1 607.2M218.1 607.2L219.9 601.8M219.9 601.8L221.2 596.3M221.2 596.3L222.3 590.7M222.3 590.7L223.0 585.0M223.0 585.0L223.3 579.3M223.3 579.3L223.3 573.5M223.3 573.5L223.0 567.7M223.0 567.7L222.3 562.0M222.3 562.0L221.2 556.3M221.2 556.3L219.9 550.7M219.9 550.7L218.1 545.2M218.1 545.2L216.1 539.8M216.1 539.8L213.8 534.6M213.8 534.6L211.1 529.6M211.1 529.6L208.1 524.8M208.1 524.8L204.9 520.2M204.9 520.2L201.4 516.0M201.4 516.0L197.7 511.9M197.7 511.9L193.8 508.2M193.8 508.2L189.6 504.8M189.6 504.8L185.2 501.8M185.2 501.8L180.7 499.0M180.7 499.0L176.1 496.7M181.3 648.4L185.2 645.7M185.2 645.7L188.9 642.7M188.9 642.7L192.4 639.3M192.4 639.3L195.7 635.6M195.7 635.6L198.8 631.7M198.8 631.7L201.6 627.4M201.6 627.4L204.2 622.9M204.2 622.9L206.6 618.1M206.6 618.1L208.6 613.1M201.6 525.5L198.8 520.9M198.8 520.9L195.7 516.5M195.7 516.5L192.4 512.5M192.4 512.5L188.9 508.7M188.9 508.7L185.2 505.3M185.2 505.3L181.3 502.1M181.3 502.1L177.4 499.4M177.4 499.4L173.2 497.0M173.2 497.0L169.0 494.9M173.2 650.9L176.5 648.7M176.5 648.7L179.8 646.1M179.8 646.1L182.9 643.1M182.9 643.1L185.8 639.8M185.8 639.8L188.6 636.1M188.6 636.1L191.1 632.2M191.1 632.2L193.5 628.0M185.8 512.9L182.9 509.1M182.9 509.1L179.8 505.6M179.8 505.6L176.5 502.5M176.5 502.5L173.2 499.7M173.2 499.7L169.7 497.2M169.7 497.2L166.2 495.1M166.2 495.1L162.6 493.4M165.7 653.0L168.4 651.2M168.4 651.2L171.0 649.0M171.0 649.0L173.5 646.4M173.5 646.4L175.9 643.4M175.9 643.4L178.2 640.1M178.2 640.1L180.3 636.5M175.9 509.5L173.5 505.9M173.5 505.9L171.0 502.7M171.0 502.7L168.4 499.9M168.4 499.9L165.7 497.4M165.7 497.4L162.9 495.3M162.9 495.3L160.1 493.6M161.2 653.2L163.0 651.4M163.0 651.4L164.8 649.2M164.8 649.2L166.5 646.6M166.5 646.6L168.2 643.7M168.2 643.7L169.7 640.4M166.5 506.2L164.8 502.9M164.8 502.9L163.0 500.1M163.0 500.1L161.2 497.6M161.2 497.6L159.3 495.4M159.3 495.4L157.4 493.6M156.4 653.3L157.4 651.5M157.4 651.5L158.3 649.3M158.3 649.3L159.1 646.7M159.1 646.7L160.0 643.8M160.0 643.8L160.8 640.6M158.3 503.1L157.4 500.2M157.4 500.2L156.4 497.6M156.4 497.6L155.5 495.5M155.5 495.5L154.5 493.7" stroke="#5aa8a8" stroke-width="0.8" fill="none" opacity="0.38"/><path d="M151.5 640.6L147.8 640.6M147.8 640.6L144.1 640.6M144.1 640.6L140.4 640.6M140.4 640.6L136.8 640.5M136.8 640.5L133.3 640.4M169.7 640.4L166.2 640.5M166.2 640.5L162.6 640.6M162.6 640.6L158.9 640.6M158.9 640.6L155.2 640.6M155.2 640.6L151.5 640.6M151.5 631.2L147.1 631.1M147.1 631.1L142.7 631.1M142.7 631.1L138.3 631.1M138.3 631.1L134.0 631.0M134.0 631.0L129.8 630.9M129.8 630.9L125.6 630.8M125.6 630.8L121.7 630.6M121.7 630.6L117.8 630.5M117.8 630.5L114.1 630.3M114.1 630.3L110.6 630.1M192.4 630.1L188.9 630.3M188.9 630.3L185.2 630.5M185.2 630.5L181.3 630.6M181.3 630.6L177.4 630.8M177.4 630.8L173.2 630.9M173.2 630.9L169.0 631.0M169.0 631.0L164.7 631.1M164.7 631.1L160.3 631.1M160.3 631.1L155.9 631.1M155.9 631.1L151.5 631.2M151.5 619.9L146.5 619.9M146.5 619.9L141.5 619.9M141.5 619.9L136.6 619.8M136.6 619.8L131.7 619.7M131.7 619.7L126.9 619.6M126.9 619.6L122.3 619.5M122.3 619.5L117.8 619.3M117.8 619.3L113.4 619.2M113.4 619.2L109.2 619.0M109.2 619.0L105.3 618.7M105.3 618.7L101.6 618.5M101.6 618.5L98.1 618.3M204.9 618.3L201.4 618.5M201.4 618.5L197.7 618.7M197.7 618.7L193.8 619.0M193.8 619.0L189.6 619.2M189.6 619.2L185.2 619.3M185.2 619.3L180.7 619.5M180.7 619.5L176.1 619.6M176.1 619.6L171.3 619.7M171.3 619.7L166.4 619.8M166.4 619.8L161.5 619.9M161.5 619.9L156.5 619.9M156.5 619.9L151.5 619.9M151.5 607.3L146.1 607.2M146.1 607.2L140.6 607.2M140.6 607.2L135.3 607.1M135.3 607.1L130.0 607.0M130.0 607.0L124.8 606.9M124.8 606.9L119.8 606.8M119.8 606.8L114.9 606.6M114.9 606.6L110.2 606.4M110.2 606.4L105.7 606.2M105.7 606.2L101.4 606.0M101.4 606.0L97.3 605.7M97.3 605.7L93.5 605.5M93.5 605.5L90.0 605.2M213.0 605.2L209.5 605.5M209.5 605.5L205.7 605.7M205.7 605.7L201.6 606.0M201.6 606.0L197.3 606.2M197.3 606.2L192.8 606.4M192.8 606.4L188.1 606.6M188.1 606.6L183.2 606.8M183.2 606.8L178.2 606.9M178.2 606.9L173.0 607.0M173.0 607.0L167.7 607.1M167.7 607.1L162.4 607.2M162.4 607.2L156.9 607.2M156.9 607.2L151.5 607.3M151.5 593.6L145.8 593.6M145.8 593.6L140.1 593.5M140.1 593.5L134.5 593.5M134.5 593.5L129.0 593.4M129.0 593.4L123.5 593.2M123.5 593.2L118.3 593.1M118.3 593.1L113.1 592.9M113.1 592.9L108.2 592.7M108.2 592.7L103.5 592.5M103.5 592.5L99.0 592.2M99.0 592.2L94.7 592.0M94.7 592.0L90.8 591.7M90.8 591.7L87.1 591.4M87.1 591.4L83.7 591.1M219.3 591.1L215.9 591.4M215.9 591.4L212.2 591.7M212.2 591.7L208.3 592.0M208.3 592.0L204.0 592.2M204.0 592.2L199.5 592.5M199.5 592.5L194.8 592.7M194.8 592.7L189.9 592.9M189.9 592.9L184.7 593.1M184.7 593.1L179.5 593.2M179.5 593.2L174.0 593.4M174.0 593.4L168.5 593.5M168.5 593.5L162.9 593.5M162.9 593.5L157.2 593.6M157.2 593.6L151.5 593.6M151.5 579.3L145.7 579.3M145.7 579.3L139.9 579.2M139.9 579.2L134.2 579.2M134.2 579.2L128.6 579.1M128.6 579.1L123.1 578.9M123.1 578.9L117.7 578.8M117.7 578.8L112.5 578.6M112.5 578.6L107.5 578.4M107.5 578.4L102.7 578.2M102.7 578.2L98.1 577.9M98.1 577.9L93.8 577.7M93.8 577.7L89.8 577.4M89.8 577.4L86.1 577.1M86.1 577.1L82.7 576.7M220.3 576.7L216.9 577.1M216.9 577.1L213.2 577.4M213.2 577.4L209.2 577.7M209.2 577.7L204.9 577.9M204.9 577.9L200.3 578.2M200.3 578.2L195.5 578.4M195.5 578.4L190.5 578.6M190.5 578.6L185.3 578.8M185.3 578.8L179.9 578.9M179.9 578.9L174.4 579.1M174.4 579.1L168.8 579.2M168.8 579.2L163.1 579.2M163.1 579.2L157.3 579.3M157.3 579.3L151.5 579.3M151.5 564.8L145.8 564.8M145.8 564.8L140.1 564.8M140.1 564.8L134.5 564.7M134.5 564.7L129.0 564.6M129.0 564.6L123.5 564.5M123.5 564.5L118.3 564.3M118.3 564.3L113.1 564.2M113.1 564.2L108.2 564.0M108.2 564.0L103.5 563.7M103.5 563.7L99.0 563.5M99.0 563.5L94.7 563.2M94.7 563.2L90.8 562.9M90.8 562.9L87.1 562.6M87.1 562.6L83.7 562.3M219.3 562.3L215.9 562.6M215.9 562.6L212.2 562.9M212.2 562.9L208.3 563.2M208.3 563.2L204.0 563.5M204.0 563.5L199.5 563.7M199.5 563.7L194.8 564.0M194.8 564.0L189.9 564.2M189.9 564.2L184.7 564.3M184.7 564.3L179.5 564.5M179.5 564.5L174.0 564.6M174.0 564.6L168.5 564.7M168.5 564.7L162.9 564.8M162.9 564.8L157.2 564.8M157.2 564.8L151.5 564.8M151.5 550.6L146.1 550.6M146.1 550.6L140.6 550.6M140.6 550.6L135.3 550.5M135.3 550.5L130.0 550.4M130.0 550.4L124.8 550.3M124.8 550.3L119.8 550.2M119.8 550.2L114.9 550.0M114.9 550.0L110.2 549.8M110.2 549.8L105.7 549.6M105.7 549.6L101.4 549.3M101.4 549.3L97.3 549.1M97.3 549.1L93.5 548.8M93.5 548.8L90.0 548.5M90.0 548.5L86.8 548.2M216.2 548.2L213.0 548.5M213.0 548.5L209.5 548.8M209.5 548.8L205.7 549.1M205.7 549.1L201.6 549.3M201.6 549.3L197.3 549.6M197.3 549.6L192.8 549.8M192.8 549.8L188.1 550.0M188.1 550.0L183.2 550.2M183.2 550.2L178.2 550.3M178.2 550.3L173.0 550.4M173.0 550.4L167.7 550.5M167.7 550.5L162.4 550.6M162.4 550.6L156.9 550.6M156.9 550.6L151.5 550.6M151.5 537.1L146.5 537.1M146.5 537.1L141.5 537.1M141.5 537.1L136.6 537.0M136.6 537.0L131.7 536.9M131.7 536.9L126.9 536.8M126.9 536.8L122.3 536.7M122.3 536.7L117.8 536.5M117.8 536.5L113.4 536.4M113.4 536.4L109.2 536.2M109.2 536.2L105.3 535.9M105.3 535.9L101.6 535.7M101.6 535.7L98.1 535.5M98.1 535.5L94.9 535.2M208.1 535.2L204.9 535.5M204.9 535.5L201.4 535.7M201.4 535.7L197.7 535.9M197.7 535.9L193.8 536.2M193.8 536.2L189.6 536.4M189.6 536.4L185.2 536.5M185.2 536.5L180.7 536.7M180.7 536.7L176.1 536.8M176.1 536.8L171.3 536.9M171.3 536.9L166.4 537.0M166.4 537.0L161.5 537.1M161.5 537.1L156.5 537.1M156.5 537.1L151.5 537.1M151.5 524.7L147.1 524.7M147.1 524.7L142.7 524.7M142.7 524.7L138.3 524.6M138.3 524.6L134.0 524.5M134.0 524.5L129.8 524.4M129.8 524.4L125.6 524.3M125.6 524.3L121.7 524.2M121.7 524.2L117.8 524.0M117.8 524.0L114.1 523.9M114.1 523.9L110.6 523.7M110.6 523.7L107.3 523.5M107.3 523.5L104.2 523.2M198.8 523.2L195.7 523.5M195.7 523.5L192.4 523.7M192.4 523.7L188.9 523.9M188.9 523.9L185.2 524.0M185.2 524.0L181.3 524.2M181.3 524.2L177.4 524.3M177.4 524.3L173.2 524.4M173.2 524.4L169.0 524.5M169.0 524.5L164.7 524.6M164.7 524.6L160.3 524.7M160.3 524.7L155.9 524.7M155.9 524.7L151.5 524.7M151.5 513.8L147.8 513.8M147.8 513.8L144.1 513.8M144.1 513.8L140.4 513.7M140.4 513.7L136.8 513.7M136.8 513.7L133.3 513.6M133.3 513.6L129.8 513.5M129.8 513.5L126.5 513.4M126.5 513.4L123.2 513.2M123.2 513.2L120.1 513.1M120.1 513.1L117.2 512.9M185.8 512.9L182.9 513.1M182.9 513.1L179.8 513.2M179.8 513.2L176.5 513.4M176.5 513.4L173.2 513.5M173.2 513.5L169.7 513.6M169.7 513.6L166.2 513.7M166.2 513.7L162.6 513.7M162.6 513.7L158.9 513.8M158.9 513.8L155.2 513.8M155.2 513.8L151.5 513.8M151.5 504.7L148.6 504.7M148.6 504.7L145.7 504.7M145.7 504.7L142.9 504.6M160.1 504.6L157.3 504.7M157.3 504.7L154.4 504.7M154.4 504.7L151.5 504.7M151.5 643.9L151.5 640.6M151.5 640.6L151.5 637.1M151.5 637.1L151.5 633.2M151.5 633.2L151.5 629.0M151.5 629.0L151.5 624.6M151.5 624.6L151.5 619.9M151.5 619.9L151.5 615.0M151.5 615.0L151.5 609.9M151.5 609.9L151.5 604.6M151.5 604.6L151.5 599.1M151.5 599.1L151.5 593.6M151.5 593.6L151.5 587.9M151.5 587.9L151.5 582.2M151.5 582.2L151.5 576.4M151.5 576.4L151.5 570.6M151.5 570.6L151.5 564.8M151.5 564.8L151.5 559.1M151.5 559.1L151.5 553.4M151.5 553.4L151.5 547.9M151.5 547.9L151.5 542.4M151.5 542.4L151.5 537.1M151.5 537.1L151.5 532.0M151.5 532.0L151.5 527.1M151.5 527.1L151.5 522.4M151.5 522.4L151.5 518.0M151.5 518.0L151.5 513.8M151.5 513.8L151.5 509.9M151.5 509.9L151.5 506.4M151.5 506.4L151.5 503.1M142.2 640.6L141.5 637.0M141.5 637.0L140.8 633.1M140.8 633.1L140.1 629.0M140.1 629.0L139.6 624.5M139.6 624.5L139.0 619.8M139.0 619.8L138.5 614.9M138.5 614.9L138.1 609.8M138.1 609.8L137.8 604.5M137.8 604.5L137.5 599.1M137.5 599.1L137.3 593.5M137.3 593.5L137.2 587.8M137.2 587.8L137.1 582.1M137.1 582.1L137.1 576.3M137.1 576.3L137.2 570.5M137.2 570.5L137.3 564.7M137.3 564.7L137.5 559.0M137.5 559.0L137.8 553.3M137.8 553.3L138.1 547.8M138.1 547.8L138.5 542.3M138.5 542.3L139.0 537.0M139.0 537.0L139.6 531.9M139.6 531.9L140.1 527.0M140.1 527.0L140.8 522.3M140.8 522.3L141.5 517.9M141.5 517.9L142.2 513.7M142.2 513.7L143.0 509.9M143.0 509.9L143.9 506.3M143.9 506.3L144.7 503.1M133.3 640.4L131.8 636.8M131.8 636.8L130.4 632.9M130.4 632.9L129.1 628.8M129.1 628.8L128.0 624.3M128.0 624.3L126.9 619.6M126.9 619.6L126.0 614.7M126.0 614.7L125.2 609.6M125.2 609.6L124.5 604.3M124.5 604.3L124.0 598.8M124.0 598.8L123.5 593.2M123.5 593.2L123.3 587.6M123.3 587.6L123.1 581.8M123.1 581.8L123.1 576.0M123.1 576.0L123.3 570.3M123.3 570.3L123.5 564.5M123.5 564.5L124.0 558.7M124.0 558.7L124.5 553.1M124.5 553.1L125.2 547.5M125.2 547.5L126.0 542.1M126.0 542.1L126.9 536.8M126.9 536.8L128.0 531.7M128.0 531.7L129.1 526.8M129.1 526.8L130.4 522.1M130.4 522.1L131.8 517.7M131.8 517.7L133.3 513.6M133.3 513.6L134.8 509.7M134.8 509.7L136.5 506.2M122.7 636.5L120.7 632.6M120.7 632.6L118.8 628.4M118.8 628.4L117.1 624.0M117.1 624.0L115.6 619.2M115.6 619.2L114.2 614.3M114.2 614.3L113.0 609.2M113.0 609.2L112.0 603.9M112.0 603.9L111.2 598.4M111.2 598.4L110.6 592.8M110.6 592.8L110.2 587.1M110.2 587.1L110.0 581.4M110.0 581.4L110.0 575.6M110.0 575.6L110.2 569.8M110.2 569.8L110.6 564.1M110.6 564.1L111.2 558.3M111.2 558.3L112.0 552.7M112.0 552.7L113.0 547.1M113.0 547.1L114.2 541.7M114.2 541.7L115.6 536.4M115.6 536.4L117.1 531.4M117.1 531.4L118.8 526.5M118.8 526.5L120.7 521.8M120.7 521.8L122.7 517.4M122.7 517.4L124.8 513.3M124.8 513.3L127.1 509.5M109.5 628.0L107.3 623.5M107.3 623.5L105.3 618.7M105.3 618.7L103.5 613.8M103.5 613.8L102.0 608.6M102.0 608.6L100.8 603.3M100.8 603.3L99.7 597.8M99.7 597.8L99.0 592.2M99.0 592.2L98.4 586.6M98.4 586.6L98.2 580.8M98.2 580.8L98.2 575.0M98.2 575.0L98.4 569.3M98.4 569.3L99.0 563.5M99.0 563.5L99.7 557.8M99.7 557.8L100.8 552.1M100.8 552.1L102.0 546.6M102.0 546.6L103.5 541.2M103.5 541.2L105.3 535.9M105.3 535.9L107.3 530.9M107.3 530.9L109.5 526.0M109.5 526.0L111.9 521.4M111.9 521.4L114.4 517.0M114.4 517.0L117.2 512.9M94.4 613.1L92.5 608.0M92.5 608.0L91.0 602.6M91.0 602.6L89.8 597.1M89.8 597.1L88.9 591.5M88.9 591.5L88.3 585.9M88.3 585.9L88.0 580.1M88.0 580.1L88.0 574.3M88.0 574.3L88.3 568.5M88.3 568.5L88.9 562.8M88.9 562.8L89.8 557.1M89.8 557.1L91.0 551.5M91.0 551.5L92.5 545.9M92.5 545.9L94.4 540.5M94.4 540.5L96.4 535.3M96.4 535.3L98.8 530.3M98.8 530.3L101.4 525.5M208.6 613.1L210.5 608.0M210.5 608.0L212.0 602.6M212.0 602.6L213.2 597.1M213.2 597.1L214.1 591.5M214.1 591.5L214.7 585.9M214.7 585.9L215.0 580.1M215.0 580.1L215.0 574.3M215.0 574.3L214.7 568.5M214.7 568.5L214.1 562.8M214.1 562.8L213.2 557.1M213.2 557.1L212.0 551.5M212.0 551.5L210.5 545.9M210.5 545.9L208.6 540.5M208.6 540.5L206.6 535.3M206.6 535.3L204.2 530.3M204.2 530.3L201.6 525.5M193.5 628.0L195.7 623.5M195.7 623.5L197.7 618.7M197.7 618.7L199.5 613.8M199.5 613.8L201.0 608.6M201.0 608.6L202.2 603.3M202.2 603.3L203.3 597.8M203.3 597.8L204.0 592.2M204.0 592.2L204.6 586.6M204.6 586.6L204.8 580.8M204.8 580.8L204.8 575.0M204.8 575.0L204.6 569.3M204.6 569.3L204.0 563.5M204.0 563.5L203.3 557.8M203.3 557.8L202.2 552.1M202.2 552.1L201.0 546.6M201.0 546.6L199.5 541.2M199.5 541.2L197.7 535.9M197.7 535.9L195.7 530.9M195.7 530.9L193.5 526.0M193.5 526.0L191.1 521.4M191.1 521.4L188.6 517.0M188.6 517.0L185.8 512.9M180.3 636.5L182.3 632.6M182.3 632.6L184.2 628.4M184.2 628.4L185.9 624.0M185.9 624.0L187.4 619.2M187.4 619.2L188.8 614.3M188.8 614.3L190.0 609.2M190.0 609.2L191.0 603.9M191.0 603.9L191.8 598.4M191.8 598.4L192.4 592.8M192.4 592.8L192.8 587.1M192.8 587.1L193.0 581.4M193.0 581.4L193.0 575.6M193.0 575.6L192.8 569.8M192.8 569.8L192.4 564.1M192.4 564.1L191.8 558.3M191.8 558.3L191.0 552.7M191.0 552.7L190.0 547.1M190.0 547.1L188.8 541.7M188.8 541.7L187.4 536.4M187.4 536.4L185.9 531.4M185.9 531.4L184.2 526.5M184.2 526.5L182.3 521.8M182.3 521.8L180.3 517.4M180.3 517.4L178.2 513.3M178.2 513.3L175.9 509.5M169.7 640.4L171.2 636.8M171.2 636.8L172.6 632.9M172.6 632.9L173.9 628.8M173.9 628.8L175.0 624.3M175.0 624.3L176.1 619.6M176.1 619.6L177.0 614.7M177.0 614.7L177.8 609.6M177.8 609.6L178.5 604.3M178.5 604.3L179.0 598.8M179.0 598.8L179.5 593.2M179.5 593.2L179.7 587.6M179.7 587.6L179.9 581.8M179.9 581.8L179.9 576.0M179.9 576.0L179.7 570.3M179.7 570.3L179.5 564.5M179.5 564.5L179.0 558.7M179.0 558.7L178.5 553.1M178.5 553.1L177.8 547.5M177.8 547.5L177.0 542.1M177.0 542.1L176.1 536.8M176.1 536.8L175.0 531.7M175.0 531.7L173.9 526.8M173.9 526.8L172.6 522.1M172.6 522.1L171.2 517.7M171.2 517.7L169.7 513.6M169.7 513.6L168.2 509.7M168.2 509.7L166.5 506.2M160.8 640.6L161.5 637.0M161.5 637.0L162.2 633.1M162.2 633.1L162.9 629.0M162.9 629.0L163.4 624.5M163.4 624.5L164.0 619.8M164.0 619.8L164.5 614.9M164.5 614.9L164.9 609.8M164.9 609.8L165.2 604.5M165.2 604.5L165.5 599.1M165.5 599.1L165.7 593.5M165.7 593.5L165.8 587.8M165.8 587.8L165.9 582.1M165.9 582.1L165.9 576.3M165.9 576.3L165.8 570.5M165.8 570.5L165.7 564.7M165.7 564.7L165.5 559.0M165.5 559.0L165.2 553.3M165.2 553.3L164.9 547.8M164.9 547.8L164.5 542.3M164.5 542.3L164.0 537.0M164.0 537.0L163.4 531.9M163.4 531.9L162.9 527.0M162.9 527.0L162.2 522.3M162.2 522.3L161.5 517.9M161.5 517.9L160.8 513.7M160.8 513.7L160.0 509.9M160.0 509.9L159.1 506.3M159.1 506.3L158.3 503.1" stroke="#5aa8a8" stroke-width="0.8" fill="none" opacity="0.55"/>

<path d="M151.7 511V644" stroke="#d2d2d2" stroke-width="2"/>
<path d="M142 511 Q136 535 138 555" stroke="#ff8000" stroke-width="3" fill="none"/>
<path d="M136.7 591 Q137 625 142 647" stroke="#ffb400" stroke-width="3" fill="none"/>
<path d="M68 573 H126 M149 572.8 H205 M220 572.8 H235" stroke="#d8d000" stroke-width="5"/>
<path d="M220 573 H235" stroke="#88c000" stroke-width="4"/>
<path d="M67 573 H72" stroke="#ffb000" stroke-width="4"/>
<path d="M153.5 504.7 Q188 520 205 557" stroke="#ffb400" stroke-width="1.5" fill="none"/>
<path d="M216 591 Q212 620 204 638" stroke="#ff9a00" stroke-width="1.5" fill="none"/>
<path d="M208 591 Q190 630 156.6 650.6" stroke="#d4cc00" stroke-width="1.5" fill="none"/>
<path d="M162.8 587 Q161 610 158.7 628" stroke="#88cc00" stroke-width="1.2" fill="none"/>
<path d="M74 599 Q88 632 122 651" stroke="#ffb000" stroke-width="1" stroke-dasharray="2 2" fill="none"/>
<path d="M93 521 Q80 535 75 552" stroke="#88cc00" stroke-width="1" stroke-dasharray="2 2" fill="none"/>
<path d="M110 590 Q115 630 140 650" stroke="#d8d8d8" stroke-width="1" stroke-dasharray="2 2" fill="none"/>
<path d="M125 540 Q105 560 100 600" stroke="#d8d8d8" stroke-width="1" stroke-dasharray="2 2" fill="none"/><path d="M83 552 Q95 535 107 521" stroke="#d8d8d8" stroke-width="1" stroke-dasharray="2 2" fill="none"/><path d="M110 529 Q120 515 128 508" stroke="#d8d8d8" stroke-width="1" stroke-dasharray="2 2" fill="none"/><path d="M124 507 H128 M165 496 H172 M190 505 H196 M178 520 H186" stroke="#d8d8d8" stroke-width="1"/><path d="M132 507 H152" stroke="#6a5a40" stroke-width="2"/>
<path d="M167 527 Q190 545 205 560" stroke="#d8d8d8" stroke-width="1" stroke-dasharray="2 2" fill="none"/>

</svg>
</body></html>
